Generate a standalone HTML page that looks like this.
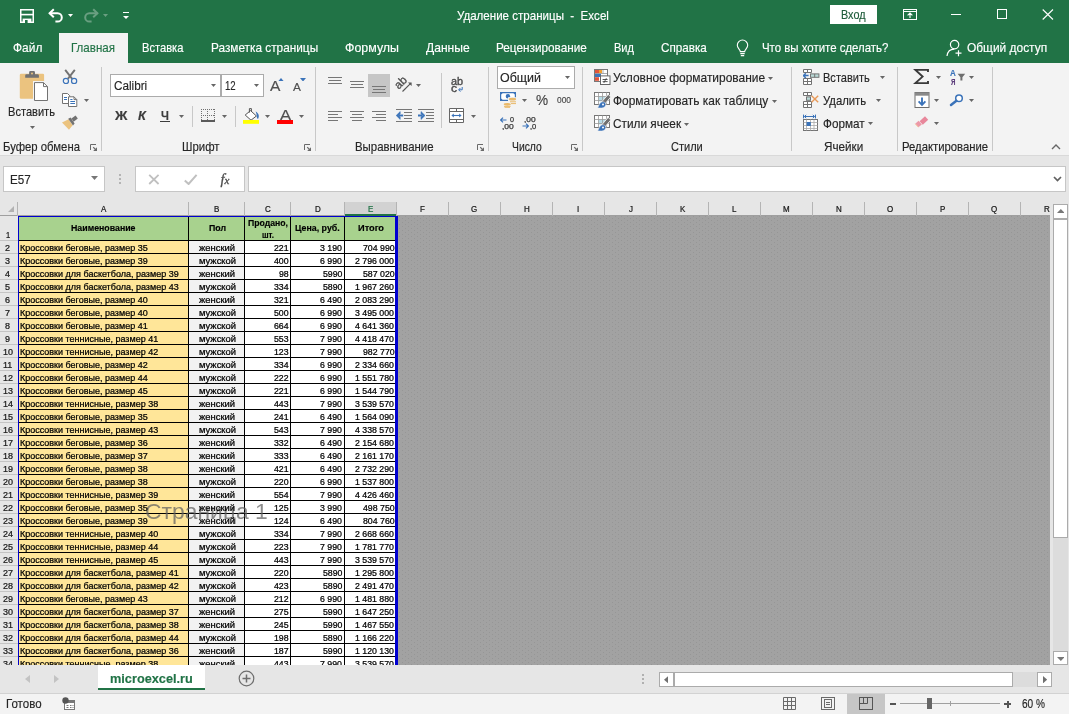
<!DOCTYPE html>
<html><head><meta charset="utf-8"><title>Excel</title>
<style>
html,body{margin:0;padding:0}
body{width:1069px;height:714px;overflow:hidden;position:relative;background:#e6e6e6;font-family:"Liberation Sans",sans-serif;}
.r{position:absolute;display:block}
.t{position:absolute;white-space:pre;transform-origin:0 50%;-webkit-text-stroke:0.15px;}
#w{position:absolute;left:0;top:0;width:1069px;height:714px;will-change:transform;}
</style></head><body><div id="w">
<div class="r" style="left:0px;top:0px;width:1069px;height:63px;background:#217346;"></div>
<div class="r" style="left:0px;top:63px;width:1069px;height:91.5px;background:#f3f3f3;"></div>
<div class="r" style="left:0px;top:154.5px;width:1069px;height:1px;background:#d9d9d9;"></div>
<div class="r" style="left:59px;top:33px;width:69px;height:30px;background:#f3f3f3;"></div>
<div class="t" style="left:457.0px;top:8.0px;font-size:11.9px;line-height:16px;color:#fff;transform:scaleX(0.9718);">Удаление страницы  -  Excel</div>
<div class="t" style="left:12.6px;top:40.0px;font-size:11.9px;line-height:16px;color:#fff;transform:scaleX(1.0049);">Файл</div>
<div class="t" style="left:71.2px;top:40.0px;font-size:11.9px;line-height:16px;color:#217346;transform:scaleX(0.9714);">Главная</div>
<div class="t" style="left:142.4px;top:40.0px;font-size:11.9px;line-height:16px;color:#fff;transform:scaleX(0.9360);">Вставка</div>
<div class="t" style="left:211.0px;top:40.0px;font-size:11.9px;line-height:16px;color:#fff;transform:scaleX(0.9930);">Разметка страницы</div>
<div class="t" style="left:345.0px;top:40.0px;font-size:11.9px;line-height:16px;color:#fff;transform:scaleX(1.0428);">Формулы</div>
<div class="t" style="left:425.8px;top:40.0px;font-size:11.9px;line-height:16px;color:#fff;transform:scaleX(1.0164);">Данные</div>
<div class="t" style="left:496.3px;top:40.0px;font-size:11.9px;line-height:16px;color:#fff;transform:scaleX(0.9892);">Рецензирование</div>
<div class="t" style="left:614.4px;top:40.0px;font-size:11.9px;line-height:16px;color:#fff;transform:scaleX(0.9290);">Вид</div>
<div class="t" style="left:661.1px;top:40.0px;font-size:11.9px;line-height:16px;color:#fff;transform:scaleX(0.9832);">Справка</div>
<div class="t" style="left:762.0px;top:40.0px;font-size:11.9px;line-height:16px;color:#fff;transform:scaleX(0.9616);">Что вы хотите сделать?</div>
<div class="t" style="left:966.7px;top:40.0px;font-size:11.9px;line-height:16px;color:#fff;transform:scaleX(1.0031);">Общий доступ</div>
<div class="r" style="left:830px;top:5px;width:47px;height:19px;background:#fff;"></div>
<div class="t" style="left:841.4px;top:7.0px;font-size:11.9px;line-height:16px;color:#1e5c3a;transform:scaleX(0.9101);">Вход</div>
<svg class="r" style="left:20px;top:9px" width="14" height="14" viewBox="0 0 14 14"><path d="M0.75 0.75H13.25V13.25H0.75Z" fill="none" stroke="#fff" stroke-width="1.5"/><path d="M1 5.6H13" stroke="#fff" stroke-width="1.6"/><rect x="2.6" y="9.6" width="8.8" height="4" fill="#fff"/><rect x="5" y="11" width="2.6" height="3" fill="#217346"/></svg>
<svg class="r" style="left:48.4px;top:8px" width="16" height="15" viewBox="0 0 16 15"><path d="M1.4 5.2H9.6A4.2 4.2 0 0 1 9.6 13.6H7.4" fill="none" stroke="#fff" stroke-width="2"/><path d="M5.8 1.2L1.6 5.2L5.8 9.2" fill="none" stroke="#fff" stroke-width="2"/></svg>
<svg class="r" style="left:68px;top:14.3px" width="5" height="3" viewBox="0 0 5 3"><path d="M0 0H5L2.5 3Z" fill="#fff"/></svg>
<svg class="r" style="left:82.8px;top:8px" width="16" height="15" viewBox="0 0 16 15"><path d="M14.6 5.2H6.4A4.2 4.2 0 0 0 6.4 13.6H8.6" fill="none" stroke="#6a9f81" stroke-width="2"/><path d="M10.2 1.2L14.4 5.2L10.2 9.2" fill="none" stroke="#6a9f81" stroke-width="2"/></svg>
<svg class="r" style="left:103.1px;top:14.3px" width="5" height="3" viewBox="0 0 5 3"><path d="M0 0H5L2.5 3Z" fill="#6a9f81"/></svg>
<div class="r" style="left:122.5px;top:11.9px;width:6px;height:1.3px;background:#fff;"></div>
<svg class="r" style="left:122.5px;top:15.8px" width="6" height="3" viewBox="0 0 6 3"><path d="M0 0H6L3 3Z" fill="#fff"/></svg>
<svg class="r" style="left:903px;top:9px" width="14" height="11" viewBox="0 0 14 11"><rect x="0.5" y="0.5" width="13" height="10" fill="none" stroke="#fff"/><path d="M0.5 2.5H13.5" stroke="#fff"/><path d="M7 9V4.3M4.6 6.4L7 4L9.4 6.4" fill="none" stroke="#fff" stroke-width="1.1"/></svg>
<div class="r" style="left:951px;top:14px;width:10px;height:1px;background:#fff;"></div>
<svg class="r" style="left:997px;top:9px" width="10" height="10" viewBox="0 0 10 10"><rect x="0.5" y="0.5" width="9" height="9" fill="none" stroke="#fff"/></svg>
<svg class="r" style="left:1042px;top:9px" width="11.9" height="11" viewBox="0 0 11.9 11"><path d="M0.7 0.5L11 10.5M11 0.5L0.7 10.5" stroke="#fff" stroke-width="1.1"/></svg>
<svg class="r" style="left:736px;top:39px" width="14" height="18" viewBox="0 0 14 18"><path d="M4.3 12.6C4.3 10.6 1.3 9.2 1.3 6.2A5.2 5.2 0 0 1 11.7 6.2C11.7 9.2 8.7 10.6 8.7 12.6Z" fill="none" stroke="#fff" stroke-width="1.1"/><path d="M4.3 14.6H8.7M4.8 16.6H8.2" stroke="#fff" stroke-width="1.1"/></svg>
<svg class="r" style="left:946px;top:39px" width="17" height="18" viewBox="0 0 17 18"><circle cx="8.6" cy="5.6" r="4.2" fill="none" stroke="#fff" stroke-width="1.2"/><path d="M1 17C1.6 12.6 4.6 10.2 8.2 10.2" fill="none" stroke="#fff" stroke-width="1.2"/><path d="M9.5 14.2H15.5M12.5 11.2V17.2" stroke="#fff" stroke-width="1.2"/></svg>
<div class="r" style="left:101px;top:67px;width:1px;height:84px;background:#c8c8c8;"></div>
<div class="r" style="left:315px;top:67px;width:1px;height:84px;background:#c8c8c8;"></div>
<div class="r" style="left:488px;top:67px;width:1px;height:84px;background:#c8c8c8;"></div>
<div class="r" style="left:582px;top:67px;width:1px;height:84px;background:#c8c8c8;"></div>
<div class="r" style="left:791px;top:67px;width:1px;height:84px;background:#c8c8c8;"></div>
<div class="r" style="left:897px;top:67px;width:1px;height:84px;background:#c8c8c8;"></div>
<div class="r" style="left:992px;top:67px;width:1px;height:84px;background:#c8c8c8;"></div>
<div class="t" style="left:3.0px;top:139.0px;font-size:11.9px;line-height:16px;color:#262626;transform:scaleX(0.9522);">Буфер обмена</div>
<div class="t" style="left:181.9px;top:139.0px;font-size:11.9px;line-height:16px;color:#262626;transform:scaleX(0.9578);">Шрифт</div>
<div class="t" style="left:354.9px;top:139.0px;font-size:11.9px;line-height:16px;color:#262626;transform:scaleX(0.9596);">Выравнивание</div>
<div class="t" style="left:511.9px;top:139.0px;font-size:11.9px;line-height:16px;color:#262626;transform:scaleX(0.8707);">Число</div>
<div class="t" style="left:671.2px;top:139.0px;font-size:11.9px;line-height:16px;color:#262626;transform:scaleX(0.9276);">Стили</div>
<div class="t" style="left:824.0px;top:139.0px;font-size:11.9px;line-height:16px;color:#262626;transform:scaleX(0.9847);">Ячейки</div>
<div class="t" style="left:901.7px;top:139.0px;font-size:11.9px;line-height:16px;color:#262626;transform:scaleX(0.9509);">Редактирование</div>
<div class="t" style="left:8.4px;top:104.0px;font-size:11.9px;line-height:16px;color:#262626;transform:scaleX(0.9318);">Вставить</div>
<div class="r" style="left:110px;top:74px;width:111px;height:23px;background:#fff;box-sizing:border-box;border:1px solid #ababab;"></div>
<div class="r" style="left:221px;top:74px;width:43px;height:23px;background:#fff;box-sizing:border-box;border:1px solid #ababab;"></div>
<div class="t" style="left:113.5px;top:78.0px;font-size:12px;line-height:16px;color:#262626;transform:scaleX(0.9763);">Calibri</div>
<div class="t" style="left:225.1px;top:78.0px;font-size:12px;line-height:16px;color:#262626;transform:scaleX(0.8017);">12</div>
<div class="r" style="left:497px;top:66px;width:78px;height:23px;background:#fff;box-sizing:border-box;border:1px solid #ababab;"></div>
<div class="t" style="left:500.2px;top:70.0px;font-size:11.9px;line-height:16px;color:#262626;transform:scaleX(1.0445);">Общий</div>
<div class="t" style="left:613.2px;top:70.0px;font-size:11.9px;line-height:16px;color:#262626;transform:scaleX(1.0060);">Условное форматирование</div>
<div class="t" style="left:613.2px;top:93.0px;font-size:11.9px;line-height:16px;color:#262626;transform:scaleX(1.0030);">Форматировать как таблицу</div>
<div class="t" style="left:613.2px;top:116.0px;font-size:11.9px;line-height:16px;color:#262626;transform:scaleX(0.9916);">Стили ячеек</div>
<div class="t" style="left:822.6px;top:70.0px;font-size:11.9px;line-height:16px;color:#262626;transform:scaleX(0.9298);">Вставить</div>
<div class="t" style="left:822.6px;top:93.0px;font-size:11.9px;line-height:16px;color:#262626;transform:scaleX(0.9509);">Удалить</div>
<div class="t" style="left:822.9px;top:116.0px;font-size:11.9px;line-height:16px;color:#262626;transform:scaleX(0.9841);">Формат</div>
<svg class="r" style="left:19px;top:70px" width="30" height="32" viewBox="0 0 30 32"><rect x="0.8" y="3.8" width="24.3" height="25" rx="1.2" fill="#ebc37f"/><path d="M6.2 7.7V5.6Q6.2 4.3 7.5 4.3H10.1V2.4Q10.1 1 11.5 1H14.6Q16 1 16 2.4V4.3H18.6Q19.9 4.3 19.9 5.6V7.7Z" fill="#727272"/><circle cx="13" cy="3.4" r="1" fill="#ebc37f"/><rect x="14" y="11" width="16" height="21" fill="#f3f3f3"/><path d="M15.5 12.6H24.5L28.5 16.6V30.5H15.5Z" fill="#fff" stroke="#727272" stroke-width="1"/><path d="M24.5 12.6V16.6H28.5" fill="none" stroke="#727272" stroke-width="1"/></svg>
<svg class="r" style="left:30px;top:126.1px" width="5" height="3" viewBox="0 0 5 3"><path d="M0 0H5L2.5 3Z" fill="#666"/></svg>
<svg class="r" style="left:62px;top:69px" width="16" height="16" viewBox="0 0 16 16"><path d="M3.2 0.8L10.2 9.8M12.8 0.8L5.8 9.8" stroke="#727272" stroke-width="1.9" fill="none"/><circle cx="3.9" cy="11.9" r="2.6" fill="none" stroke="#3b73b9" stroke-width="1.2"/><circle cx="12.1" cy="11.9" r="2.6" fill="none" stroke="#3b73b9" stroke-width="1.2"/></svg>
<svg class="r" style="left:61px;top:92px" width="17" height="16" viewBox="0 0 17 16"><path d="M1.5 1.5H6.5L8.8 3.8V11.5H1.5Z" fill="#fff" stroke="#727272"/><path d="M3 5.5H6M3 7.5H6" stroke="#3b73b9"/><path d="M7.5 4.8H13L15.8 7.6V14.5H7.5Z" fill="#fff" stroke="#727272"/><path d="M13 4.8V7.6H15.8" fill="none" stroke="#727272"/><path d="M9.3 9.5H14M9.3 11.5H14M9.3 7.5H11.5" stroke="#3b73b9"/></svg>
<svg class="r" style="left:84px;top:98.9px" width="5" height="3" viewBox="0 0 5 3"><path d="M0 0H5L2.5 3Z" fill="#666"/></svg>
<svg class="r" style="left:61px;top:115px" width="18" height="16" viewBox="0 0 18 16"><path d="M1 7.6L7.6 4.2L11.6 10.2L8 14.8Z" fill="#ebc37f"/><path d="M7.2 3.8L9.6 2.4L13.6 8.4L12 10.4Z" fill="#727272"/><path d="M10.4 3.6L14.6 0.6L16.8 3.6L12.6 6.8Z" fill="#727272"/></svg>
<svg class="r" style="left:90px;top:144px" width="8" height="8" viewBox="0 0 8 8"><path d="M0.5 6V0.5H6" fill="none" stroke="#6a6a6a"/><path d="M3.2 3.2L6 6" fill="none" stroke="#6a6a6a" stroke-width="1.1"/><path d="M7 3.2V7H3.2Z" fill="#6a6a6a"/></svg>
<svg class="r" style="left:304px;top:144px" width="8" height="8" viewBox="0 0 8 8"><path d="M0.5 6V0.5H6" fill="none" stroke="#6a6a6a"/><path d="M3.2 3.2L6 6" fill="none" stroke="#6a6a6a" stroke-width="1.1"/><path d="M7 3.2V7H3.2Z" fill="#6a6a6a"/></svg>
<svg class="r" style="left:477px;top:144px" width="8" height="8" viewBox="0 0 8 8"><path d="M0.5 6V0.5H6" fill="none" stroke="#6a6a6a"/><path d="M3.2 3.2L6 6" fill="none" stroke="#6a6a6a" stroke-width="1.1"/><path d="M7 3.2V7H3.2Z" fill="#6a6a6a"/></svg>
<svg class="r" style="left:570.5px;top:144px" width="8" height="8" viewBox="0 0 8 8"><path d="M0.5 6V0.5H6" fill="none" stroke="#6a6a6a"/><path d="M3.2 3.2L6 6" fill="none" stroke="#6a6a6a" stroke-width="1.1"/><path d="M7 3.2V7H3.2Z" fill="#6a6a6a"/></svg>
<svg class="r" style="left:211px;top:84.2px" width="5" height="3" viewBox="0 0 5 3"><path d="M0 0H5L2.5 3Z" fill="#666"/></svg>
<svg class="r" style="left:254.1px;top:84.2px" width="5" height="3" viewBox="0 0 5 3"><path d="M0 0H5L2.5 3Z" fill="#666"/></svg>
<div class="t" style="left:270.0px;top:77.0px;font-size:14px;line-height:19px;color:#505050;transform:scaleX(1.1138);">A</div>
<svg class="r" style="left:278px;top:77.5px" width="6" height="3.5" viewBox="0 0 6 3.5"><path d="M0 3.5H6L3 0Z" fill="#3b73b9"/></svg>
<div class="t" style="left:292.8px;top:80.0px;font-size:11.3px;line-height:15px;color:#505050;transform:scaleX(1.0481);">A</div>
<svg class="r" style="left:300px;top:77.5px" width="6" height="3.5" viewBox="0 0 6 3.5"><path d="M0 0H6L3 3.5Z" fill="#3b73b9"/></svg>
<div class="t" style="left:114.8px;top:108.0px;font-size:12px;line-height:16px;color:#3c3c3c;transform:scaleX(1.1434);font-weight:bold;">Ж</div>
<div class="t" style="left:138.3px;top:108.0px;font-size:12px;line-height:16px;color:#3c3c3c;transform:scaleX(1.0710);font-weight:bold;font-style:italic;">К</div>
<div class="t" style="left:160.9px;top:108.0px;font-size:12px;line-height:16px;color:#3c3c3c;transform:scaleX(0.9370);font-weight:bold;">Ч</div>
<div class="r" style="left:160px;top:121px;width:10px;height:1px;background:#3c3c3c;"></div>
<svg class="r" style="left:178.9px;top:115px" width="5" height="3" viewBox="0 0 5 3"><path d="M0 0H5L2.5 3Z" fill="#666"/></svg>
<div class="r" style="left:192px;top:106px;width:1px;height:21px;background:#c8c8c8;"></div>
<div class="r" style="left:235px;top:106px;width:1px;height:21px;background:#c8c8c8;"></div>
<svg class="r" style="left:201px;top:108px" width="14" height="15" viewBox="0 0 14 15"><g fill="#707070" shape-rendering="crispEdges"><rect x="0" y="1" width="1" height="1"/><rect x="2" y="1" width="1" height="1"/><rect x="4" y="1" width="1" height="1"/><rect x="6" y="1" width="1" height="1"/><rect x="8" y="1" width="1" height="1"/><rect x="10" y="1" width="1" height="1"/><rect x="12" y="1" width="1" height="1"/><rect x="0" y="7" width="1" height="1"/><rect x="2" y="7" width="1" height="1"/><rect x="4" y="7" width="1" height="1"/><rect x="6" y="7" width="1" height="1"/><rect x="8" y="7" width="1" height="1"/><rect x="10" y="7" width="1" height="1"/><rect x="12" y="7" width="1" height="1"/><rect x="0" y="1" width="1" height="1"/><rect x="0" y="3" width="1" height="1"/><rect x="0" y="5" width="1" height="1"/><rect x="0" y="7" width="1" height="1"/><rect x="0" y="9" width="1" height="1"/><rect x="0" y="11" width="1" height="1"/><rect x="6" y="1" width="1" height="1"/><rect x="6" y="3" width="1" height="1"/><rect x="6" y="5" width="1" height="1"/><rect x="6" y="7" width="1" height="1"/><rect x="6" y="9" width="1" height="1"/><rect x="6" y="11" width="1" height="1"/><rect x="13" y="1" width="1" height="1"/><rect x="13" y="3" width="1" height="1"/><rect x="13" y="5" width="1" height="1"/><rect x="13" y="7" width="1" height="1"/><rect x="13" y="9" width="1" height="1"/><rect x="13" y="11" width="1" height="1"/><rect x="0" y="12" width="14" height="2" fill="#5a5a5a"/></g></svg>
<svg class="r" style="left:222px;top:115px" width="5" height="3" viewBox="0 0 5 3"><path d="M0 0H5L2.5 3Z" fill="#666"/></svg>
<svg class="r" style="left:243px;top:107px" width="17" height="17" viewBox="0 0 17 17"><path d="M7.6 3.6L13.4 9L8 13.2L2.2 8Z" fill="#fff" stroke="#555" stroke-width="1"/><path d="M6.4 5.6V1.6H8.4V4.4" fill="none" stroke="#555"/><path d="M12.6 4.6C15.6 6 16.8 9.4 15 12C13 10.8 14.4 8 12.6 4.6Z" fill="#3b73b9"/><rect x="0" y="13" width="16" height="3.8" fill="#ffff00"/></svg>
<svg class="r" style="left:264.8px;top:115px" width="5" height="3" viewBox="0 0 5 3"><path d="M0 0H5L2.5 3Z" fill="#666"/></svg>
<div class="t" style="left:279.8px;top:106.0px;font-size:14.5px;line-height:19px;color:#505050;transform:scaleX(1.1477);">A</div>
<div class="r" style="left:277px;top:120px;width:16px;height:3.8px;background:#ff0000;"></div>
<svg class="r" style="left:298.8px;top:115px" width="5" height="3" viewBox="0 0 5 3"><path d="M0 0H5L2.5 3Z" fill="#666"/></svg>
<svg class="r" style="left:328px;top:76px" width="14" height="14" viewBox="0 0 14 14"><path d="M0 1.5H14M1 4.5H13M0 7.5H14" stroke="#767676" stroke-width="1" fill="none"/></svg>
<svg class="r" style="left:350px;top:80px" width="14" height="14" viewBox="0 0 14 14"><path d="M0 1.5H14M1 4.5H13M0 7.5H14" stroke="#767676" stroke-width="1" fill="none"/></svg>
<div class="r" style="left:368px;top:74px;width:22px;height:23px;background:#c6c6c6;"></div>
<svg class="r" style="left:372px;top:85px" width="14" height="14" viewBox="0 0 14 14"><path d="M0 1.5H14M1 4.5H13M0 7.5H14" stroke="#767676" stroke-width="1" fill="none"/></svg>
<svg class="r" style="left:328px;top:110px" width="14" height="18" viewBox="0 0 14 18"><path d="M0 1.5H14M0 4.5H10M0 7.5H14M0 10.5H10" stroke="#767676" stroke-width="1" fill="none"/></svg>
<svg class="r" style="left:350px;top:110px" width="14" height="18" viewBox="0 0 14 18"><path d="M0 1.5H14M2 4.5H12M0 7.5H14M2 10.5H12" stroke="#767676" stroke-width="1" fill="none"/></svg>
<svg class="r" style="left:372px;top:110px" width="14" height="18" viewBox="0 0 14 18"><path d="M0 1.5H14M4 4.5H14M0 7.5H14M4 10.5H14" stroke="#767676" stroke-width="1" fill="none"/></svg>
<div class="t" style="left:396.2px;top:79.8px;font-size:11.5px;line-height:14px;color:#4a4a4a;-webkit-text-stroke:0.3px;transform:rotate(-45deg);transform-origin:50%% 50%%;">ab</div>
<svg class="r" style="left:400px;top:80px" width="13" height="13" viewBox="0 0 13 13"><path d="M2.5 11.5L10.4 3.6" stroke="#555" stroke-width="1.1" fill="none"/><path d="M8 2.4H11.6V6Z" fill="#555"/></svg>
<svg class="r" style="left:415.9px;top:83.8px" width="5" height="3" viewBox="0 0 5 3"><path d="M0 0H5L2.5 3Z" fill="#666"/></svg>
<svg class="r" style="left:396px;top:108px" width="16" height="15" viewBox="0 0 16 15"><path d="M0 1.5H16M0 13.5H16M8 4.5H16M8 7.5H16M8 10.5H16" stroke="#767676" fill="none"/><path d="M3 7.5H7.2" stroke="#3b73b9" stroke-width="2" fill="none"/><path d="M4.2 3.6L0.2 7.5L4.2 11.4L4.2 9.2L2.6 7.5L4.2 5.8Z" fill="#3b73b9" stroke="#3b73b9" stroke-width="0.6"/></svg>
<svg class="r" style="left:418px;top:108px" width="16" height="15" viewBox="0 0 16 15"><path d="M0 1.5H16M0 13.5H16M8 4.5H16M8 7.5H16M8 10.5H16" stroke="#767676" fill="none"/><path d="M0 7.5H4" stroke="#3b73b9" stroke-width="2" fill="none"/><path d="M3 3.6L7 7.5L3 11.4L3 9.2L4.6 7.5L3 5.8Z" fill="#3b73b9" stroke="#3b73b9" stroke-width="0.6"/></svg>
<div class="r" style="left:441px;top:73px;width:1px;height:55px;background:#c8c8c8;"></div>
<div class="t" style="left:450.8px;top:75.0px;font-size:10.3px;line-height:14px;color:#4a4a4a;transform:scaleX(1.0562);-webkit-text-stroke:0.35px;">ab</div>
<div class="t" style="left:450.8px;top:82.0px;font-size:10.3px;line-height:14px;color:#4a4a4a;transform:scaleX(1.1650);-webkit-text-stroke:0.35px;">c</div>
<svg class="r" style="left:458px;top:87px" width="5" height="5" viewBox="0 0 5 5"><path d="M4.2 0V2.8H1" stroke="#3b73b9" fill="none" stroke-width="1"/><path d="M2.4 1L0.6 2.8L2.4 4.6" stroke="#3b73b9" fill="none"/></svg>
<svg class="r" style="left:449px;top:108px" width="16" height="15" viewBox="0 0 16 15"><path d="M0.5 0.5H14.5V14.5H0.5ZM0.5 3.5H14.5M0.5 11.5H14.5M7.5 0.5V3.5M7.5 11.5V14.5" fill="#fff" stroke="#666"/><path d="M3.4 7.5H11.6" fill="none" stroke="#3b73b9" stroke-width="1.1"/><path d="M4.8 5.6L2.4 7.5L4.8 9.4ZM10.2 5.6L12.6 7.5L10.2 9.4Z" fill="#3b73b9"/></svg>
<svg class="r" style="left:470.9px;top:114.9px" width="5" height="3" viewBox="0 0 5 3"><path d="M0 0H5L2.5 3Z" fill="#666"/></svg>
<svg class="r" style="left:564.8px;top:76.1px" width="5" height="3" viewBox="0 0 5 3"><path d="M0 0H5L2.5 3Z" fill="#666"/></svg>
<svg class="r" style="left:500px;top:92px" width="17" height="16" viewBox="0 0 17 16"><rect x="0" y="0" width="16" height="9" fill="#3b73b9"/><path d="M2.6 1.2H13.4L14.8 2.6V6.4L13.4 7.8H2.6L1.2 6.4V2.6Z" fill="#fff"/><circle cx="7.9" cy="4.2" r="2.2" fill="#3b73b9"/><rect x="8" y="5.2" width="9" height="4" fill="#f3f3f3"/><ellipse cx="12.5" cy="7.2" rx="3.6" ry="1.4" fill="#e9b96a"/><path d="M10 9.8H16M11 11.6H16" stroke="#e9b96a" stroke-width="1"/><ellipse cx="7.3" cy="12.3" rx="3.6" ry="1.4" fill="#e9b96a"/><path d="M4 14.4H10.6M4.6 15.7H10" stroke="#e9b96a" stroke-width="1"/></svg>
<svg class="r" style="left:522px;top:99px" width="5" height="3" viewBox="0 0 5 3"><path d="M0 0H5L2.5 3Z" fill="#666"/></svg>
<div class="t" style="left:536.3px;top:91.0px;font-size:14.5px;line-height:19px;color:#444;transform:scaleX(0.9386);">%</div>
<div class="t" style="left:556.9px;top:93.0px;font-size:9.5px;line-height:13px;color:#444;transform:scaleX(0.8834);">000</div>
<svg class="r" style="left:500px;top:117px" width="7" height="6" viewBox="0 0 7 6"><path d="M0.8 3H6.5M3 0.6L0.6 3L3 5.4" stroke="#3b73b9" stroke-width="1.2" fill="none"/></svg>
<div class="t" style="left:510.0px;top:114.0px;font-size:8px;line-height:11px;color:#333;transform:scaleX(0.8989);-webkit-text-stroke:0.25px;">0</div>
<div class="t" style="left:502.2px;top:121.0px;font-size:8px;line-height:11px;color:#333;transform:scaleX(1.0608);-webkit-text-stroke:0.25px;">,00</div>
<div class="t" style="left:524.2px;top:114.0px;font-size:8px;line-height:11px;color:#333;transform:scaleX(1.0518);-webkit-text-stroke:0.25px;">,00</div>
<svg class="r" style="left:522px;top:123px" width="7" height="6" viewBox="0 0 7 6"><path d="M0.5 3H6.2M4 0.6L6.4 3L4 5.4" stroke="#3b73b9" stroke-width="1.2" fill="none"/></svg>
<div class="t" style="left:529.6px;top:121.0px;font-size:8px;line-height:11px;color:#333;transform:scaleX(0.9440);-webkit-text-stroke:0.25px;">,0</div>
<svg class="r" style="left:768px;top:76.5px" width="5" height="3" viewBox="0 0 5 3"><path d="M0 0H5L2.5 3Z" fill="#666"/></svg>
<svg class="r" style="left:772.1px;top:99.5px" width="5" height="3" viewBox="0 0 5 3"><path d="M0 0H5L2.5 3Z" fill="#666"/></svg>
<svg class="r" style="left:683.8px;top:122.5px" width="5" height="3" viewBox="0 0 5 3"><path d="M0 0H5L2.5 3Z" fill="#666"/></svg>
<svg class="r" style="left:594px;top:69px" width="17" height="16" viewBox="0 0 17 16"><rect x="0.5" y="0.5" width="13" height="12" fill="#fff" stroke="#777"/><rect x="1" y="1" width="4" height="3.4" fill="#e0533a"/><rect x="5" y="1" width="3" height="3.4" fill="#f0a030"/><rect x="1" y="4.6" width="6" height="3.4" fill="#3b73b9"/><rect x="1" y="8.2" width="4" height="3.6" fill="#e0533a"/><path d="M1 4.5H13M9 1V5" stroke="#999" stroke-width="0.8"/><rect x="6.5" y="6.9" width="9.5" height="8.6" fill="#fff" stroke="#666"/><path d="M8.6 10.5H13.6M8.6 12.6H13.6M12.4 9.2L9.8 13.9" stroke="#444" stroke-width="0.9" fill="none"/></svg>
<svg class="r" style="left:594px;top:92px" width="17" height="17" viewBox="0 0 17 17"><rect x="0.5" y="0.5" width="15" height="12" fill="#fff" stroke="#777"/><rect x="4.5" y="4.5" width="7.5" height="5" fill="#b7dbe6"/><path d="M0.5 4.5H15.5M0.5 8.5H15.5M4.5 0.5V12.5M8.5 0.5V12.5M12.5 0.5V12.5" stroke="#999" stroke-width="0.8" fill="none"/><path d="M7.4 10.2L14.2 2.4L16.8 5L10.2 12.8Z" fill="#707070" stroke="#f3f3f3" stroke-width="0.9"/><path d="M3.6 15.8C5.2 14 5.4 9.8 8.8 9.8C11.8 9.8 12.6 13 10.8 14.8C9.2 16.4 6 16 3.6 15.8Z" fill="#3b73b9" stroke="#f3f3f3" stroke-width="0.5"/><circle cx="9" cy="12.6" r="1" fill="#fff"/></svg>
<svg class="r" style="left:594px;top:115px" width="17" height="17" viewBox="0 0 17 17"><rect x="0.5" y="0.5" width="15" height="12" fill="#fff" stroke="#777"/><rect x="4.5" y="4.5" width="7.5" height="5" fill="#b7dbe6"/><path d="M0.5 4.5H15.5M0.5 8.5H15.5M4.5 0.5V12.5M8.5 0.5V12.5M12.5 0.5V12.5" stroke="#999" stroke-width="0.8" fill="none"/><path d="M7.4 10.2L14.2 2.4L16.8 5L10.2 12.8Z" fill="#707070" stroke="#f3f3f3" stroke-width="0.9"/><path d="M3.6 15.8C5.2 14 5.4 9.8 8.8 9.8C11.8 9.8 12.6 13 10.8 14.8C9.2 16.4 6 16 3.6 15.8Z" fill="#3b73b9" stroke="#f3f3f3" stroke-width="0.5"/><circle cx="9" cy="12.6" r="1" fill="#fff"/></svg>
<svg class="r" style="left:879.7px;top:75.9px" width="5" height="3" viewBox="0 0 5 3"><path d="M0 0H5L2.5 3Z" fill="#666"/></svg>
<svg class="r" style="left:875.8px;top:99px" width="5" height="3" viewBox="0 0 5 3"><path d="M0 0H5L2.5 3Z" fill="#666"/></svg>
<svg class="r" style="left:868px;top:121.7px" width="5" height="3" viewBox="0 0 5 3"><path d="M0 0H5L2.5 3Z" fill="#666"/></svg>
<svg class="r" style="left:803px;top:69px" width="17" height="16" viewBox="0 0 17 16"><path d="M0.5 0.5H8.5V3.5H0.5ZM4.5 0.5V3.5M0.5 9.5H8.5V15.5H0.5ZM0.5 12.5H8.5M4.5 9.5V15.5" fill="#fff" stroke="#737373"/><rect x="7.5" y="4.9" width="8.4" height="3.4" fill="#b9d9d6" stroke="#737373"/><path d="M11.7 4.9V8.3" stroke="#737373"/><path d="M0.6 6.6H5.6M2.8 4.2L0.4 6.6L2.8 9" fill="none" stroke="#3b73b9" stroke-width="1.5"/></svg>
<svg class="r" style="left:803px;top:92px" width="17" height="16" viewBox="0 0 17 16"><path d="M0.5 0.5H8.5V3.5H0.5ZM4.5 0.5V3.5M0.5 9.5H8.5V15.5H0.5ZM0.5 12.5H8.5M4.5 9.5V15.5" fill="#fff" stroke="#737373"/><rect x="3.5" y="4.9" width="4" height="3.4" fill="#b9d9d6" stroke="#737373"/><path d="M8.6 3.8L15.2 10.2M15.2 3.8L8.6 10.2" stroke="#e89a5a" stroke-width="1.4" fill="none"/></svg>
<svg class="r" style="left:803px;top:114px" width="16" height="17" viewBox="0 0 16 17"><path d="M0.5 0.6V4.4M12.5 0.6V4.4M1.5 2.5H11.5M3.2 0.9L1.4 2.5L3.2 4.1M9.8 0.9L11.6 2.5L9.8 4.1" stroke="#3b73b9" fill="none"/><rect x="0.5" y="5.5" width="14" height="11" fill="#fff" stroke="#737373"/><path d="M0.5 8.5H14.5M0.5 11.5H14.5M0.5 14.5H14.5M3.5 5.5V16.5M7.5 5.5V16.5M11 5.5V16.5" stroke="#aaa" stroke-width="0.8" fill="none"/><rect x="3.6" y="8" width="4.2" height="4" fill="#3b73b9"/></svg>
<svg class="r" style="left:935.9px;top:75.9px" width="5" height="3" viewBox="0 0 5 3"><path d="M0 0H5L2.5 3Z" fill="#666"/></svg>
<svg class="r" style="left:969px;top:75.9px" width="5" height="3" viewBox="0 0 5 3"><path d="M0 0H5L2.5 3Z" fill="#666"/></svg>
<svg class="r" style="left:933.9px;top:99px" width="5" height="3" viewBox="0 0 5 3"><path d="M0 0H5L2.5 3Z" fill="#666"/></svg>
<svg class="r" style="left:969px;top:99px" width="5" height="3" viewBox="0 0 5 3"><path d="M0 0H5L2.5 3Z" fill="#666"/></svg>
<svg class="r" style="left:933.9px;top:121.9px" width="5" height="3" viewBox="0 0 5 3"><path d="M0 0H5L2.5 3Z" fill="#666"/></svg>
<svg class="r" style="left:913px;top:68px" width="17" height="17" viewBox="0 0 17 17"><path d="M15 4V1.9H2.4L9.6 8.6L2.4 15.1H15V13" fill="none" stroke="#3a3a3a" stroke-width="1.9" stroke-linejoin="miter"/></svg>
<div class="t" style="left:950.0px;top:67.0px;font-size:9px;line-height:12px;color:#3b73b9;transform:scaleX(0.8923);font-weight:bold;">A</div>
<div class="t" style="left:951.0px;top:76.0px;font-size:8.5px;line-height:12px;color:#5a3a7a;transform:scaleX(0.7202);font-weight:bold;">Я</div>
<svg class="r" style="left:957px;top:73px" width="9" height="8" viewBox="0 0 9 8"><path d="M0.6 0.8H8.2L5.4 4.2V7.4H3.4V4.2Z" fill="#6e6e6e"/></svg>
<svg class="r" style="left:914px;top:92px" width="16" height="16" viewBox="0 0 16 16"><rect x="1" y="0.5" width="14" height="15" fill="#fff" stroke="#6e6e6e"/><rect x="1" y="0.5" width="14" height="3.2" fill="#8a8a8a"/><path d="M8 5.6V12.6M4.6 9.4L8 12.8L11.4 9.4" fill="none" stroke="#3b73b9" stroke-width="1.9"/></svg>
<svg class="r" style="left:949px;top:93px" width="16" height="14" viewBox="0 0 16 14"><circle cx="10" cy="5.2" r="3.3" fill="#fff" stroke="#3b73b9" stroke-width="1.5"/><path d="M7.4 7.8L2 12" stroke="#3b73b9" stroke-width="2.5" stroke-linecap="round"/></svg>
<svg class="r" style="left:914px;top:115px" width="15" height="13" viewBox="0 0 15 13"><path d="M5.6 6.2L11 1.2L14.2 4.8L8.8 9.8Z" fill="#e8879b"/><path d="M1.2 8.8L4.6 5.8L7.8 9.4L4.4 12.2Z" fill="#ec98a8"/><path d="M1.2 8.8L4.4 12.2" stroke="#f2c9a0" stroke-width="1"/></svg>
<svg class="r" style="left:1051px;top:144px" width="10" height="6" viewBox="0 0 10 6"><path d="M1 5L5 1L9 5" fill="none" stroke="#666" stroke-width="1.4"/></svg>
<div class="r" style="left:3px;top:166px;width:102px;height:26px;background:#fff;box-sizing:border-box;border:1px solid #c6c6c6;"></div>
<div class="t" style="left:10.1px;top:172.0px;font-size:11.9px;line-height:16px;color:#262626;transform:scaleX(0.9776);">E57</div>
<div class="r" style="left:135px;top:166px;width:110px;height:26px;background:#fff;box-sizing:border-box;border:1px solid #c6c6c6;"></div>
<div class="r" style="left:248px;top:166px;width:818px;height:26px;background:#fff;box-sizing:border-box;border:1px solid #c6c6c6;"></div>
<svg class="r" style="left:91px;top:176px" width="7" height="4"><path d="M0 0H7L3.5 4Z" fill="#777"/></svg>
<div class="r" style="left:119px;top:174px;width:2px;height:2px;background:#b4b4b4;"></div>
<div class="r" style="left:119px;top:178px;width:2px;height:2px;background:#b4b4b4;"></div>
<div class="r" style="left:119px;top:182px;width:2px;height:2px;background:#b4b4b4;"></div>
<svg class="r" style="left:148px;top:174px" width="12" height="11" viewBox="0 0 12 11"><path d="M1.2 0.8L10.6 10M10.6 0.8L1.2 10" stroke="#c0c0c0" stroke-width="1.8" fill="none"/></svg>
<svg class="r" style="left:184px;top:174px" width="14" height="11" viewBox="0 0 14 11"><path d="M0.8 6.4L4.6 10L12.6 0.8" stroke="#c0c0c0" stroke-width="2" fill="none"/></svg>
<div class="t" style="left:220.5px;top:170px;font-family:'Liberation Serif',serif;font-style:italic;font-size:14.5px;line-height:18px;color:#4d4d4d;letter-spacing:0px;-webkit-text-stroke:0.3px;">f<span style="font-size:11px">x</span></div>
<svg class="r" style="left:1053px;top:175.5px" width="9" height="6" viewBox="0 0 9 6"><path d="M1 1L4.5 4.5L8 1" fill="none" stroke="#606060" stroke-width="1.7"/></svg>
<div class="r" style="left:0;top:202px;width:1050px;height:463px;overflow:hidden;background-color:#a2a2a2;background-image:radial-gradient(circle at 0.5px 0.5px,#969696 0.5px,transparent 0.7px),radial-gradient(circle at 0.5px 0.5px,#969696 0.5px,transparent 0.7px);background-size:6px 4px,6px 4px;background-position:0 0,3px 2px">
<div class="r" style="left:0px;top:0px;width:1050px;height:14px;background:#e6e6e6;"></div>
<div class="r" style="left:0px;top:13px;width:1050px;height:1px;background:#9f9f9f;"></div>
<div class="r" style="left:345px;top:0px;width:51px;height:12px;background:#d2d2d2;"></div>
<div class="r" style="left:345px;top:12px;width:52px;height:2px;background:#217346;"></div>
<div class="r" style="left:17px;top:0px;width:1px;height:14px;background:#b4b4b4;"></div>
<div class="t" style="left:100.8px;top:2.0px;font-size:8.3px;line-height:11px;color:#1a1a1a;transform:scaleX(0.9600);-webkit-text-stroke:0.24px;">A</div>
<div class="r" style="left:188px;top:0px;width:1px;height:14px;background:#b4b4b4;"></div>
<div class="t" style="left:213.8px;top:2.0px;font-size:8.3px;line-height:11px;color:#1a1a1a;transform:scaleX(0.9600);-webkit-text-stroke:0.24px;">B</div>
<div class="r" style="left:244px;top:0px;width:1px;height:14px;background:#b4b4b4;"></div>
<div class="t" style="left:264.6px;top:2.0px;font-size:8.3px;line-height:11px;color:#1a1a1a;transform:scaleX(0.9600);-webkit-text-stroke:0.24px;">C</div>
<div class="r" style="left:290px;top:0px;width:1px;height:14px;background:#b4b4b4;"></div>
<div class="t" style="left:314.6px;top:2.0px;font-size:8.3px;line-height:11px;color:#1a1a1a;transform:scaleX(0.9600);-webkit-text-stroke:0.24px;">D</div>
<div class="r" style="left:344px;top:0px;width:1px;height:14px;background:#b4b4b4;"></div>
<div class="t" style="left:367.8px;top:2.0px;font-size:8.3px;line-height:11px;color:#217346;transform:scaleX(0.9600);-webkit-text-stroke:0.24px;">E</div>
<div class="r" style="left:396px;top:0px;width:1px;height:14px;background:#b4b4b4;"></div>
<div class="t" style="left:420.1px;top:2.0px;font-size:8.3px;line-height:11px;color:#1a1a1a;transform:scaleX(0.9600);-webkit-text-stroke:0.24px;">F</div>
<div class="r" style="left:448px;top:0px;width:1px;height:14px;background:#b4b4b4;"></div>
<div class="t" style="left:471.4px;top:2.0px;font-size:8.3px;line-height:11px;color:#1a1a1a;transform:scaleX(0.9600);-webkit-text-stroke:0.24px;">G</div>
<div class="r" style="left:500px;top:0px;width:1px;height:14px;background:#b4b4b4;"></div>
<div class="t" style="left:523.6px;top:2.0px;font-size:8.3px;line-height:11px;color:#1a1a1a;transform:scaleX(0.9600);-webkit-text-stroke:0.24px;">H</div>
<div class="r" style="left:552px;top:0px;width:1px;height:14px;background:#b4b4b4;"></div>
<div class="t" style="left:577.4px;top:2.0px;font-size:8.3px;line-height:11px;color:#1a1a1a;transform:scaleX(0.9600);-webkit-text-stroke:0.24px;">I</div>
<div class="r" style="left:604px;top:0px;width:1px;height:14px;background:#b4b4b4;"></div>
<div class="t" style="left:628.5px;top:2.0px;font-size:8.3px;line-height:11px;color:#1a1a1a;transform:scaleX(0.9600);-webkit-text-stroke:0.24px;">J</div>
<div class="r" style="left:656px;top:0px;width:1px;height:14px;background:#b4b4b4;"></div>
<div class="t" style="left:679.8px;top:2.0px;font-size:8.3px;line-height:11px;color:#1a1a1a;transform:scaleX(0.9600);-webkit-text-stroke:0.24px;">K</div>
<div class="r" style="left:708px;top:0px;width:1px;height:14px;background:#b4b4b4;"></div>
<div class="t" style="left:732.3px;top:2.0px;font-size:8.3px;line-height:11px;color:#1a1a1a;transform:scaleX(0.9600);-webkit-text-stroke:0.24px;">L</div>
<div class="r" style="left:760px;top:0px;width:1px;height:14px;background:#b4b4b4;"></div>
<div class="t" style="left:783.2px;top:2.0px;font-size:8.3px;line-height:11px;color:#1a1a1a;transform:scaleX(0.9600);-webkit-text-stroke:0.24px;">M</div>
<div class="r" style="left:812px;top:0px;width:1px;height:14px;background:#b4b4b4;"></div>
<div class="t" style="left:835.6px;top:2.0px;font-size:8.3px;line-height:11px;color:#1a1a1a;transform:scaleX(0.9600);-webkit-text-stroke:0.24px;">N</div>
<div class="r" style="left:864px;top:0px;width:1px;height:14px;background:#b4b4b4;"></div>
<div class="t" style="left:887.4px;top:2.0px;font-size:8.3px;line-height:11px;color:#1a1a1a;transform:scaleX(0.9600);-webkit-text-stroke:0.24px;">O</div>
<div class="r" style="left:916px;top:0px;width:1px;height:14px;background:#b4b4b4;"></div>
<div class="t" style="left:939.8px;top:2.0px;font-size:8.3px;line-height:11px;color:#1a1a1a;transform:scaleX(0.9600);-webkit-text-stroke:0.24px;">P</div>
<div class="r" style="left:968px;top:0px;width:1px;height:14px;background:#b4b4b4;"></div>
<div class="t" style="left:991.4px;top:2.0px;font-size:8.3px;line-height:11px;color:#1a1a1a;transform:scaleX(0.9600);-webkit-text-stroke:0.24px;">Q</div>
<div class="r" style="left:1020px;top:0px;width:1px;height:14px;background:#b4b4b4;"></div>
<div class="t" style="left:1043.6px;top:2.0px;font-size:8.3px;line-height:11px;color:#1a1a1a;transform:scaleX(0.9600);-webkit-text-stroke:0.24px;">R</div>
<div class="r" style="left:0px;top:14px;width:18px;height:449px;background:#e6e6e6;"></div>
<svg class="r" style="left:8px;top:4px" width="6" height="6"><path d="M6 0V6H0Z" fill="#b2b2b2"/></svg>
<div class="r" style="left:18px;top:14px;width:378px;height:25px;background:#a8d28e;"></div>
<div class="r" style="left:18px;top:39px;width:170px;height:500px;background:#ffe699;"></div>
<div class="r" style="left:188px;top:39px;width:56px;height:500px;background:#f2f2f2;"></div>
<div class="r" style="left:244px;top:39px;width:152px;height:500px;background:#fff;"></div>
<div class="r" style="left:0px;top:38px;width:18px;height:1px;background:#c4c4c4;"></div>
<div class="r" style="left:18px;top:38px;width:378px;height:1px;background:#000;"></div>
<div class="r" style="left:0px;top:51px;width:18px;height:1px;background:#c4c4c4;"></div>
<div class="r" style="left:18px;top:51px;width:378px;height:1px;background:#000;"></div>
<div class="r" style="left:0px;top:64px;width:18px;height:1px;background:#c4c4c4;"></div>
<div class="r" style="left:18px;top:64px;width:378px;height:1px;background:#000;"></div>
<div class="r" style="left:0px;top:77px;width:18px;height:1px;background:#c4c4c4;"></div>
<div class="r" style="left:18px;top:77px;width:378px;height:1px;background:#000;"></div>
<div class="r" style="left:0px;top:90px;width:18px;height:1px;background:#c4c4c4;"></div>
<div class="r" style="left:18px;top:90px;width:378px;height:1px;background:#000;"></div>
<div class="r" style="left:0px;top:103px;width:18px;height:1px;background:#c4c4c4;"></div>
<div class="r" style="left:18px;top:103px;width:378px;height:1px;background:#000;"></div>
<div class="r" style="left:0px;top:116px;width:18px;height:1px;background:#c4c4c4;"></div>
<div class="r" style="left:18px;top:116px;width:378px;height:1px;background:#000;"></div>
<div class="r" style="left:0px;top:129px;width:18px;height:1px;background:#c4c4c4;"></div>
<div class="r" style="left:18px;top:129px;width:378px;height:1px;background:#000;"></div>
<div class="r" style="left:0px;top:142px;width:18px;height:1px;background:#c4c4c4;"></div>
<div class="r" style="left:18px;top:142px;width:378px;height:1px;background:#000;"></div>
<div class="r" style="left:0px;top:155px;width:18px;height:1px;background:#c4c4c4;"></div>
<div class="r" style="left:18px;top:155px;width:378px;height:1px;background:#000;"></div>
<div class="r" style="left:0px;top:168px;width:18px;height:1px;background:#c4c4c4;"></div>
<div class="r" style="left:18px;top:168px;width:378px;height:1px;background:#000;"></div>
<div class="r" style="left:0px;top:181px;width:18px;height:1px;background:#c4c4c4;"></div>
<div class="r" style="left:18px;top:181px;width:378px;height:1px;background:#000;"></div>
<div class="r" style="left:0px;top:194px;width:18px;height:1px;background:#c4c4c4;"></div>
<div class="r" style="left:18px;top:194px;width:378px;height:1px;background:#000;"></div>
<div class="r" style="left:0px;top:207px;width:18px;height:1px;background:#c4c4c4;"></div>
<div class="r" style="left:18px;top:207px;width:378px;height:1px;background:#000;"></div>
<div class="r" style="left:0px;top:220px;width:18px;height:1px;background:#c4c4c4;"></div>
<div class="r" style="left:18px;top:220px;width:378px;height:1px;background:#000;"></div>
<div class="r" style="left:0px;top:233px;width:18px;height:1px;background:#c4c4c4;"></div>
<div class="r" style="left:18px;top:233px;width:378px;height:1px;background:#000;"></div>
<div class="r" style="left:0px;top:246px;width:18px;height:1px;background:#c4c4c4;"></div>
<div class="r" style="left:18px;top:246px;width:378px;height:1px;background:#000;"></div>
<div class="r" style="left:0px;top:259px;width:18px;height:1px;background:#c4c4c4;"></div>
<div class="r" style="left:18px;top:259px;width:378px;height:1px;background:#000;"></div>
<div class="r" style="left:0px;top:272px;width:18px;height:1px;background:#c4c4c4;"></div>
<div class="r" style="left:18px;top:272px;width:378px;height:1px;background:#000;"></div>
<div class="r" style="left:0px;top:285px;width:18px;height:1px;background:#c4c4c4;"></div>
<div class="r" style="left:18px;top:285px;width:378px;height:1px;background:#000;"></div>
<div class="r" style="left:0px;top:298px;width:18px;height:1px;background:#c4c4c4;"></div>
<div class="r" style="left:18px;top:298px;width:378px;height:1px;background:#000;"></div>
<div class="r" style="left:0px;top:311px;width:18px;height:1px;background:#c4c4c4;"></div>
<div class="r" style="left:18px;top:311px;width:378px;height:1px;background:#000;"></div>
<div class="r" style="left:0px;top:324px;width:18px;height:1px;background:#c4c4c4;"></div>
<div class="r" style="left:18px;top:324px;width:378px;height:1px;background:#000;"></div>
<div class="r" style="left:0px;top:337px;width:18px;height:1px;background:#c4c4c4;"></div>
<div class="r" style="left:18px;top:337px;width:378px;height:1px;background:#000;"></div>
<div class="r" style="left:0px;top:350px;width:18px;height:1px;background:#c4c4c4;"></div>
<div class="r" style="left:18px;top:350px;width:378px;height:1px;background:#000;"></div>
<div class="r" style="left:0px;top:363px;width:18px;height:1px;background:#c4c4c4;"></div>
<div class="r" style="left:18px;top:363px;width:378px;height:1px;background:#000;"></div>
<div class="r" style="left:0px;top:376px;width:18px;height:1px;background:#c4c4c4;"></div>
<div class="r" style="left:18px;top:376px;width:378px;height:1px;background:#000;"></div>
<div class="r" style="left:0px;top:389px;width:18px;height:1px;background:#c4c4c4;"></div>
<div class="r" style="left:18px;top:389px;width:378px;height:1px;background:#000;"></div>
<div class="r" style="left:0px;top:402px;width:18px;height:1px;background:#c4c4c4;"></div>
<div class="r" style="left:18px;top:402px;width:378px;height:1px;background:#000;"></div>
<div class="r" style="left:0px;top:415px;width:18px;height:1px;background:#c4c4c4;"></div>
<div class="r" style="left:18px;top:415px;width:378px;height:1px;background:#000;"></div>
<div class="r" style="left:0px;top:428px;width:18px;height:1px;background:#c4c4c4;"></div>
<div class="r" style="left:18px;top:428px;width:378px;height:1px;background:#000;"></div>
<div class="r" style="left:0px;top:441px;width:18px;height:1px;background:#c4c4c4;"></div>
<div class="r" style="left:18px;top:441px;width:378px;height:1px;background:#000;"></div>
<div class="r" style="left:0px;top:454px;width:18px;height:1px;background:#c4c4c4;"></div>
<div class="r" style="left:18px;top:454px;width:378px;height:1px;background:#000;"></div>
<div class="r" style="left:0px;top:467px;width:18px;height:1px;background:#c4c4c4;"></div>
<div class="r" style="left:18px;top:467px;width:378px;height:1px;background:#000;"></div>
<div class="r" style="left:188px;top:15px;width:1px;height:500px;background:#000;"></div>
<div class="r" style="left:244px;top:15px;width:1px;height:500px;background:#000;"></div>
<div class="r" style="left:290px;top:15px;width:1px;height:500px;background:#000;"></div>
<div class="r" style="left:344px;top:15px;width:1px;height:500px;background:#000;"></div>
<div class="r" style="left:18px;top:14px;width:380px;height:1px;background:#0000d0;"></div>
<div class="r" style="left:18px;top:14px;width:1px;height:500px;background:#0000d0;"></div>
<div class="r" style="left:395px;top:14px;width:3px;height:500px;background:#0000d0;"></div>
<div class="t" style="left:145.0px;top:295.0px;font-size:22px;line-height:29px;color:rgba(95,95,95,0.72);transform:scaleX(1.0402);-webkit-text-stroke:0;">Страница 1</div>
<div class="t" style="left:71.0px;top:20.0px;font-size:8.5px;line-height:12px;color:#000;transform:scaleX(1.0344);font-weight:bold;">Наименование</div>
<div class="t" style="left:208.5px;top:20.0px;font-size:8.5px;line-height:12px;color:#000;transform:scaleX(1.0309);font-weight:bold;">Пол</div>
<div class="t" style="left:247.5px;top:15.0px;font-size:8.5px;line-height:12px;color:#000;transform:scaleX(1.0207);font-weight:bold;">Продано,</div>
<div class="t" style="left:261.5px;top:27.0px;font-size:8.5px;line-height:12px;color:#000;transform:scaleX(0.9331);font-weight:bold;">шт.</div>
<div class="t" style="left:295.3px;top:20.0px;font-size:8.5px;line-height:12px;color:#000;transform:scaleX(1.0386);font-weight:bold;">Цена, руб.</div>
<div class="t" style="left:357.5px;top:20.0px;font-size:8.5px;line-height:12px;color:#000;transform:scaleX(1.0846);font-weight:bold;">Итого</div>
<div class="t" style="left:5.5px;top:28.0px;font-size:8.3px;line-height:11px;color:#1a1a1a;transform:scaleX(0.9100);-webkit-text-stroke:0.24px;">1</div>
<div class="t" style="left:5.2px;top:41.0px;font-size:8.3px;line-height:11px;color:#1a1a1a;transform:scaleX(1.0800);-webkit-text-stroke:0.24px;">2</div>
<div class="t" style="left:20.1px;top:40.0px;font-size:8.5px;line-height:12px;color:#000;transform:scaleX(1.0580);-webkit-text-stroke:0.24px;">Кроссовки беговые, размер 35</div>
<div class="t" style="left:199.0px;top:40.0px;font-size:8.5px;line-height:12px;color:#000;transform:scaleX(1.1050);-webkit-text-stroke:0.24px;">женский</div>
<div class="t" style="left:273.6px;top:40.0px;font-size:8.5px;line-height:12px;color:#000;transform:scaleX(1.0300);-webkit-text-stroke:0.24px;">221</div>
<div class="t" style="left:320.1px;top:40.0px;font-size:8.5px;line-height:12px;color:#000;transform:scaleX(1.0300);-webkit-text-stroke:0.24px;">3 190</div>
<div class="t" style="left:362.5px;top:40.0px;font-size:8.5px;line-height:12px;color:#000;transform:scaleX(1.0300);-webkit-text-stroke:0.24px;">704 990</div>
<div class="t" style="left:5.2px;top:54.0px;font-size:8.3px;line-height:11px;color:#1a1a1a;transform:scaleX(1.0800);-webkit-text-stroke:0.24px;">3</div>
<div class="t" style="left:20.1px;top:53.0px;font-size:8.5px;line-height:12px;color:#000;transform:scaleX(1.0580);-webkit-text-stroke:0.24px;">Кроссовки беговые, размер 39</div>
<div class="t" style="left:198.5px;top:53.0px;font-size:8.5px;line-height:12px;color:#000;transform:scaleX(1.1050);-webkit-text-stroke:0.24px;">мужской</div>
<div class="t" style="left:273.6px;top:53.0px;font-size:8.5px;line-height:12px;color:#000;transform:scaleX(1.0300);-webkit-text-stroke:0.24px;">400</div>
<div class="t" style="left:320.1px;top:53.0px;font-size:8.5px;line-height:12px;color:#000;transform:scaleX(1.0300);-webkit-text-stroke:0.24px;">6 990</div>
<div class="t" style="left:355.2px;top:53.0px;font-size:8.5px;line-height:12px;color:#000;transform:scaleX(1.0300);-webkit-text-stroke:0.24px;">2 796 000</div>
<div class="t" style="left:5.2px;top:67.0px;font-size:8.3px;line-height:11px;color:#1a1a1a;transform:scaleX(1.0800);-webkit-text-stroke:0.24px;">4</div>
<div class="t" style="left:20.1px;top:66.0px;font-size:8.5px;line-height:12px;color:#000;transform:scaleX(1.0580);-webkit-text-stroke:0.24px;">Кроссовки для баскетбола, размер 39</div>
<div class="t" style="left:199.0px;top:66.0px;font-size:8.5px;line-height:12px;color:#000;transform:scaleX(1.1050);-webkit-text-stroke:0.24px;">женский</div>
<div class="t" style="left:278.5px;top:66.0px;font-size:8.5px;line-height:12px;color:#000;transform:scaleX(1.0300);-webkit-text-stroke:0.24px;">98</div>
<div class="t" style="left:322.5px;top:66.0px;font-size:8.5px;line-height:12px;color:#000;transform:scaleX(1.0300);-webkit-text-stroke:0.24px;">5990</div>
<div class="t" style="left:362.5px;top:66.0px;font-size:8.5px;line-height:12px;color:#000;transform:scaleX(1.0300);-webkit-text-stroke:0.24px;">587 020</div>
<div class="t" style="left:5.2px;top:80.0px;font-size:8.3px;line-height:11px;color:#1a1a1a;transform:scaleX(1.0800);-webkit-text-stroke:0.24px;">5</div>
<div class="t" style="left:20.1px;top:79.0px;font-size:8.5px;line-height:12px;color:#000;transform:scaleX(1.0580);-webkit-text-stroke:0.24px;">Кроссовки для баскетбола, размер 43</div>
<div class="t" style="left:198.5px;top:79.0px;font-size:8.5px;line-height:12px;color:#000;transform:scaleX(1.1050);-webkit-text-stroke:0.24px;">мужской</div>
<div class="t" style="left:273.6px;top:79.0px;font-size:8.5px;line-height:12px;color:#000;transform:scaleX(1.0300);-webkit-text-stroke:0.24px;">334</div>
<div class="t" style="left:322.5px;top:79.0px;font-size:8.5px;line-height:12px;color:#000;transform:scaleX(1.0300);-webkit-text-stroke:0.24px;">5890</div>
<div class="t" style="left:355.2px;top:79.0px;font-size:8.5px;line-height:12px;color:#000;transform:scaleX(1.0300);-webkit-text-stroke:0.24px;">1 967 260</div>
<div class="t" style="left:5.2px;top:93.0px;font-size:8.3px;line-height:11px;color:#1a1a1a;transform:scaleX(1.0800);-webkit-text-stroke:0.24px;">6</div>
<div class="t" style="left:20.1px;top:92.0px;font-size:8.5px;line-height:12px;color:#000;transform:scaleX(1.0580);-webkit-text-stroke:0.24px;">Кроссовки беговые, размер 40</div>
<div class="t" style="left:199.0px;top:92.0px;font-size:8.5px;line-height:12px;color:#000;transform:scaleX(1.1050);-webkit-text-stroke:0.24px;">женский</div>
<div class="t" style="left:273.6px;top:92.0px;font-size:8.5px;line-height:12px;color:#000;transform:scaleX(1.0300);-webkit-text-stroke:0.24px;">321</div>
<div class="t" style="left:320.1px;top:92.0px;font-size:8.5px;line-height:12px;color:#000;transform:scaleX(1.0300);-webkit-text-stroke:0.24px;">6 490</div>
<div class="t" style="left:355.2px;top:92.0px;font-size:8.5px;line-height:12px;color:#000;transform:scaleX(1.0300);-webkit-text-stroke:0.24px;">2 083 290</div>
<div class="t" style="left:5.2px;top:106.0px;font-size:8.3px;line-height:11px;color:#1a1a1a;transform:scaleX(1.0800);-webkit-text-stroke:0.24px;">7</div>
<div class="t" style="left:20.1px;top:105.0px;font-size:8.5px;line-height:12px;color:#000;transform:scaleX(1.0580);-webkit-text-stroke:0.24px;">Кроссовки беговые, размер 40</div>
<div class="t" style="left:198.5px;top:105.0px;font-size:8.5px;line-height:12px;color:#000;transform:scaleX(1.1050);-webkit-text-stroke:0.24px;">мужской</div>
<div class="t" style="left:273.6px;top:105.0px;font-size:8.5px;line-height:12px;color:#000;transform:scaleX(1.0300);-webkit-text-stroke:0.24px;">500</div>
<div class="t" style="left:320.1px;top:105.0px;font-size:8.5px;line-height:12px;color:#000;transform:scaleX(1.0300);-webkit-text-stroke:0.24px;">6 990</div>
<div class="t" style="left:355.2px;top:105.0px;font-size:8.5px;line-height:12px;color:#000;transform:scaleX(1.0300);-webkit-text-stroke:0.24px;">3 495 000</div>
<div class="t" style="left:5.2px;top:119.0px;font-size:8.3px;line-height:11px;color:#1a1a1a;transform:scaleX(1.0800);-webkit-text-stroke:0.24px;">8</div>
<div class="t" style="left:20.1px;top:118.0px;font-size:8.5px;line-height:12px;color:#000;transform:scaleX(1.0580);-webkit-text-stroke:0.24px;">Кроссовки беговые, размер 41</div>
<div class="t" style="left:198.5px;top:118.0px;font-size:8.5px;line-height:12px;color:#000;transform:scaleX(1.1050);-webkit-text-stroke:0.24px;">мужской</div>
<div class="t" style="left:273.6px;top:118.0px;font-size:8.5px;line-height:12px;color:#000;transform:scaleX(1.0300);-webkit-text-stroke:0.24px;">664</div>
<div class="t" style="left:320.1px;top:118.0px;font-size:8.5px;line-height:12px;color:#000;transform:scaleX(1.0300);-webkit-text-stroke:0.24px;">6 990</div>
<div class="t" style="left:355.2px;top:118.0px;font-size:8.5px;line-height:12px;color:#000;transform:scaleX(1.0300);-webkit-text-stroke:0.24px;">4 641 360</div>
<div class="t" style="left:5.2px;top:132.0px;font-size:8.3px;line-height:11px;color:#1a1a1a;transform:scaleX(1.0800);-webkit-text-stroke:0.24px;">9</div>
<div class="t" style="left:20.1px;top:131.0px;font-size:8.5px;line-height:12px;color:#000;transform:scaleX(1.0580);-webkit-text-stroke:0.24px;">Кроссовки теннисные, размер 41</div>
<div class="t" style="left:198.5px;top:131.0px;font-size:8.5px;line-height:12px;color:#000;transform:scaleX(1.1050);-webkit-text-stroke:0.24px;">мужской</div>
<div class="t" style="left:273.6px;top:131.0px;font-size:8.5px;line-height:12px;color:#000;transform:scaleX(1.0300);-webkit-text-stroke:0.24px;">553</div>
<div class="t" style="left:320.1px;top:131.0px;font-size:8.5px;line-height:12px;color:#000;transform:scaleX(1.0300);-webkit-text-stroke:0.24px;">7 990</div>
<div class="t" style="left:355.2px;top:131.0px;font-size:8.5px;line-height:12px;color:#000;transform:scaleX(1.0300);-webkit-text-stroke:0.24px;">4 418 470</div>
<div class="t" style="left:2.9px;top:145.0px;font-size:8.3px;line-height:11px;color:#1a1a1a;transform:scaleX(1.0800);-webkit-text-stroke:0.24px;">10</div>
<div class="t" style="left:20.1px;top:144.0px;font-size:8.5px;line-height:12px;color:#000;transform:scaleX(1.0580);-webkit-text-stroke:0.24px;">Кроссовки теннисные, размер 42</div>
<div class="t" style="left:198.5px;top:144.0px;font-size:8.5px;line-height:12px;color:#000;transform:scaleX(1.1050);-webkit-text-stroke:0.24px;">мужской</div>
<div class="t" style="left:273.6px;top:144.0px;font-size:8.5px;line-height:12px;color:#000;transform:scaleX(1.0300);-webkit-text-stroke:0.24px;">123</div>
<div class="t" style="left:320.1px;top:144.0px;font-size:8.5px;line-height:12px;color:#000;transform:scaleX(1.0300);-webkit-text-stroke:0.24px;">7 990</div>
<div class="t" style="left:362.5px;top:144.0px;font-size:8.5px;line-height:12px;color:#000;transform:scaleX(1.0300);-webkit-text-stroke:0.24px;">982 770</div>
<div class="t" style="left:2.9px;top:158.0px;font-size:8.3px;line-height:11px;color:#1a1a1a;transform:scaleX(1.0800);-webkit-text-stroke:0.24px;">11</div>
<div class="t" style="left:20.1px;top:157.0px;font-size:8.5px;line-height:12px;color:#000;transform:scaleX(1.0580);-webkit-text-stroke:0.24px;">Кроссовки беговые, размер 42</div>
<div class="t" style="left:198.5px;top:157.0px;font-size:8.5px;line-height:12px;color:#000;transform:scaleX(1.1050);-webkit-text-stroke:0.24px;">мужской</div>
<div class="t" style="left:273.6px;top:157.0px;font-size:8.5px;line-height:12px;color:#000;transform:scaleX(1.0300);-webkit-text-stroke:0.24px;">334</div>
<div class="t" style="left:320.1px;top:157.0px;font-size:8.5px;line-height:12px;color:#000;transform:scaleX(1.0300);-webkit-text-stroke:0.24px;">6 990</div>
<div class="t" style="left:355.2px;top:157.0px;font-size:8.5px;line-height:12px;color:#000;transform:scaleX(1.0300);-webkit-text-stroke:0.24px;">2 334 660</div>
<div class="t" style="left:2.9px;top:171.0px;font-size:8.3px;line-height:11px;color:#1a1a1a;transform:scaleX(1.0800);-webkit-text-stroke:0.24px;">12</div>
<div class="t" style="left:20.1px;top:170.0px;font-size:8.5px;line-height:12px;color:#000;transform:scaleX(1.0580);-webkit-text-stroke:0.24px;">Кроссовки беговые, размер 44</div>
<div class="t" style="left:198.5px;top:170.0px;font-size:8.5px;line-height:12px;color:#000;transform:scaleX(1.1050);-webkit-text-stroke:0.24px;">мужской</div>
<div class="t" style="left:273.6px;top:170.0px;font-size:8.5px;line-height:12px;color:#000;transform:scaleX(1.0300);-webkit-text-stroke:0.24px;">222</div>
<div class="t" style="left:320.1px;top:170.0px;font-size:8.5px;line-height:12px;color:#000;transform:scaleX(1.0300);-webkit-text-stroke:0.24px;">6 990</div>
<div class="t" style="left:355.2px;top:170.0px;font-size:8.5px;line-height:12px;color:#000;transform:scaleX(1.0300);-webkit-text-stroke:0.24px;">1 551 780</div>
<div class="t" style="left:2.9px;top:184.0px;font-size:8.3px;line-height:11px;color:#1a1a1a;transform:scaleX(1.0800);-webkit-text-stroke:0.24px;">13</div>
<div class="t" style="left:20.1px;top:183.0px;font-size:8.5px;line-height:12px;color:#000;transform:scaleX(1.0580);-webkit-text-stroke:0.24px;">Кроссовки беговые, размер 45</div>
<div class="t" style="left:198.5px;top:183.0px;font-size:8.5px;line-height:12px;color:#000;transform:scaleX(1.1050);-webkit-text-stroke:0.24px;">мужской</div>
<div class="t" style="left:273.6px;top:183.0px;font-size:8.5px;line-height:12px;color:#000;transform:scaleX(1.0300);-webkit-text-stroke:0.24px;">221</div>
<div class="t" style="left:320.1px;top:183.0px;font-size:8.5px;line-height:12px;color:#000;transform:scaleX(1.0300);-webkit-text-stroke:0.24px;">6 990</div>
<div class="t" style="left:355.2px;top:183.0px;font-size:8.5px;line-height:12px;color:#000;transform:scaleX(1.0300);-webkit-text-stroke:0.24px;">1 544 790</div>
<div class="t" style="left:2.9px;top:197.0px;font-size:8.3px;line-height:11px;color:#1a1a1a;transform:scaleX(1.0800);-webkit-text-stroke:0.24px;">14</div>
<div class="t" style="left:20.1px;top:196.0px;font-size:8.5px;line-height:12px;color:#000;transform:scaleX(1.0580);-webkit-text-stroke:0.24px;">Кроссовки теннисные, размер 38</div>
<div class="t" style="left:199.0px;top:196.0px;font-size:8.5px;line-height:12px;color:#000;transform:scaleX(1.1050);-webkit-text-stroke:0.24px;">женский</div>
<div class="t" style="left:273.6px;top:196.0px;font-size:8.5px;line-height:12px;color:#000;transform:scaleX(1.0300);-webkit-text-stroke:0.24px;">443</div>
<div class="t" style="left:320.1px;top:196.0px;font-size:8.5px;line-height:12px;color:#000;transform:scaleX(1.0300);-webkit-text-stroke:0.24px;">7 990</div>
<div class="t" style="left:355.2px;top:196.0px;font-size:8.5px;line-height:12px;color:#000;transform:scaleX(1.0300);-webkit-text-stroke:0.24px;">3 539 570</div>
<div class="t" style="left:2.9px;top:210.0px;font-size:8.3px;line-height:11px;color:#1a1a1a;transform:scaleX(1.0800);-webkit-text-stroke:0.24px;">15</div>
<div class="t" style="left:20.1px;top:209.0px;font-size:8.5px;line-height:12px;color:#000;transform:scaleX(1.0580);-webkit-text-stroke:0.24px;">Кроссовки беговые, размер 35</div>
<div class="t" style="left:199.0px;top:209.0px;font-size:8.5px;line-height:12px;color:#000;transform:scaleX(1.1050);-webkit-text-stroke:0.24px;">женский</div>
<div class="t" style="left:273.6px;top:209.0px;font-size:8.5px;line-height:12px;color:#000;transform:scaleX(1.0300);-webkit-text-stroke:0.24px;">241</div>
<div class="t" style="left:320.1px;top:209.0px;font-size:8.5px;line-height:12px;color:#000;transform:scaleX(1.0300);-webkit-text-stroke:0.24px;">6 490</div>
<div class="t" style="left:355.2px;top:209.0px;font-size:8.5px;line-height:12px;color:#000;transform:scaleX(1.0300);-webkit-text-stroke:0.24px;">1 564 090</div>
<div class="t" style="left:2.9px;top:223.0px;font-size:8.3px;line-height:11px;color:#1a1a1a;transform:scaleX(1.0800);-webkit-text-stroke:0.24px;">16</div>
<div class="t" style="left:20.1px;top:222.0px;font-size:8.5px;line-height:12px;color:#000;transform:scaleX(1.0580);-webkit-text-stroke:0.24px;">Кроссовки теннисные, размер 43</div>
<div class="t" style="left:198.5px;top:222.0px;font-size:8.5px;line-height:12px;color:#000;transform:scaleX(1.1050);-webkit-text-stroke:0.24px;">мужской</div>
<div class="t" style="left:273.6px;top:222.0px;font-size:8.5px;line-height:12px;color:#000;transform:scaleX(1.0300);-webkit-text-stroke:0.24px;">543</div>
<div class="t" style="left:320.1px;top:222.0px;font-size:8.5px;line-height:12px;color:#000;transform:scaleX(1.0300);-webkit-text-stroke:0.24px;">7 990</div>
<div class="t" style="left:355.2px;top:222.0px;font-size:8.5px;line-height:12px;color:#000;transform:scaleX(1.0300);-webkit-text-stroke:0.24px;">4 338 570</div>
<div class="t" style="left:2.9px;top:236.0px;font-size:8.3px;line-height:11px;color:#1a1a1a;transform:scaleX(1.0800);-webkit-text-stroke:0.24px;">17</div>
<div class="t" style="left:20.1px;top:235.0px;font-size:8.5px;line-height:12px;color:#000;transform:scaleX(1.0580);-webkit-text-stroke:0.24px;">Кроссовки беговые, размер 36</div>
<div class="t" style="left:199.0px;top:235.0px;font-size:8.5px;line-height:12px;color:#000;transform:scaleX(1.1050);-webkit-text-stroke:0.24px;">женский</div>
<div class="t" style="left:273.6px;top:235.0px;font-size:8.5px;line-height:12px;color:#000;transform:scaleX(1.0300);-webkit-text-stroke:0.24px;">332</div>
<div class="t" style="left:320.1px;top:235.0px;font-size:8.5px;line-height:12px;color:#000;transform:scaleX(1.0300);-webkit-text-stroke:0.24px;">6 490</div>
<div class="t" style="left:355.2px;top:235.0px;font-size:8.5px;line-height:12px;color:#000;transform:scaleX(1.0300);-webkit-text-stroke:0.24px;">2 154 680</div>
<div class="t" style="left:2.9px;top:249.0px;font-size:8.3px;line-height:11px;color:#1a1a1a;transform:scaleX(1.0800);-webkit-text-stroke:0.24px;">18</div>
<div class="t" style="left:20.1px;top:248.0px;font-size:8.5px;line-height:12px;color:#000;transform:scaleX(1.0580);-webkit-text-stroke:0.24px;">Кроссовки беговые, размер 37</div>
<div class="t" style="left:199.0px;top:248.0px;font-size:8.5px;line-height:12px;color:#000;transform:scaleX(1.1050);-webkit-text-stroke:0.24px;">женский</div>
<div class="t" style="left:273.6px;top:248.0px;font-size:8.5px;line-height:12px;color:#000;transform:scaleX(1.0300);-webkit-text-stroke:0.24px;">333</div>
<div class="t" style="left:320.1px;top:248.0px;font-size:8.5px;line-height:12px;color:#000;transform:scaleX(1.0300);-webkit-text-stroke:0.24px;">6 490</div>
<div class="t" style="left:355.2px;top:248.0px;font-size:8.5px;line-height:12px;color:#000;transform:scaleX(1.0300);-webkit-text-stroke:0.24px;">2 161 170</div>
<div class="t" style="left:2.9px;top:262.0px;font-size:8.3px;line-height:11px;color:#1a1a1a;transform:scaleX(1.0800);-webkit-text-stroke:0.24px;">19</div>
<div class="t" style="left:20.1px;top:261.0px;font-size:8.5px;line-height:12px;color:#000;transform:scaleX(1.0580);-webkit-text-stroke:0.24px;">Кроссовки беговые, размер 38</div>
<div class="t" style="left:199.0px;top:261.0px;font-size:8.5px;line-height:12px;color:#000;transform:scaleX(1.1050);-webkit-text-stroke:0.24px;">женский</div>
<div class="t" style="left:273.6px;top:261.0px;font-size:8.5px;line-height:12px;color:#000;transform:scaleX(1.0300);-webkit-text-stroke:0.24px;">421</div>
<div class="t" style="left:320.1px;top:261.0px;font-size:8.5px;line-height:12px;color:#000;transform:scaleX(1.0300);-webkit-text-stroke:0.24px;">6 490</div>
<div class="t" style="left:355.2px;top:261.0px;font-size:8.5px;line-height:12px;color:#000;transform:scaleX(1.0300);-webkit-text-stroke:0.24px;">2 732 290</div>
<div class="t" style="left:2.9px;top:275.0px;font-size:8.3px;line-height:11px;color:#1a1a1a;transform:scaleX(1.0800);-webkit-text-stroke:0.24px;">20</div>
<div class="t" style="left:20.1px;top:274.0px;font-size:8.5px;line-height:12px;color:#000;transform:scaleX(1.0580);-webkit-text-stroke:0.24px;">Кроссовки беговые, размер 38</div>
<div class="t" style="left:198.5px;top:274.0px;font-size:8.5px;line-height:12px;color:#000;transform:scaleX(1.1050);-webkit-text-stroke:0.24px;">мужской</div>
<div class="t" style="left:273.6px;top:274.0px;font-size:8.5px;line-height:12px;color:#000;transform:scaleX(1.0300);-webkit-text-stroke:0.24px;">220</div>
<div class="t" style="left:320.1px;top:274.0px;font-size:8.5px;line-height:12px;color:#000;transform:scaleX(1.0300);-webkit-text-stroke:0.24px;">6 990</div>
<div class="t" style="left:355.2px;top:274.0px;font-size:8.5px;line-height:12px;color:#000;transform:scaleX(1.0300);-webkit-text-stroke:0.24px;">1 537 800</div>
<div class="t" style="left:2.9px;top:288.0px;font-size:8.3px;line-height:11px;color:#1a1a1a;transform:scaleX(1.0800);-webkit-text-stroke:0.24px;">21</div>
<div class="t" style="left:20.1px;top:287.0px;font-size:8.5px;line-height:12px;color:#000;transform:scaleX(1.0580);-webkit-text-stroke:0.24px;">Кроссовки теннисные, размер 39</div>
<div class="t" style="left:199.0px;top:287.0px;font-size:8.5px;line-height:12px;color:#000;transform:scaleX(1.1050);-webkit-text-stroke:0.24px;">женский</div>
<div class="t" style="left:273.6px;top:287.0px;font-size:8.5px;line-height:12px;color:#000;transform:scaleX(1.0300);-webkit-text-stroke:0.24px;">554</div>
<div class="t" style="left:320.1px;top:287.0px;font-size:8.5px;line-height:12px;color:#000;transform:scaleX(1.0300);-webkit-text-stroke:0.24px;">7 990</div>
<div class="t" style="left:355.2px;top:287.0px;font-size:8.5px;line-height:12px;color:#000;transform:scaleX(1.0300);-webkit-text-stroke:0.24px;">4 426 460</div>
<div class="t" style="left:2.9px;top:301.0px;font-size:8.3px;line-height:11px;color:#1a1a1a;transform:scaleX(1.0800);-webkit-text-stroke:0.24px;">22</div>
<div class="t" style="left:20.1px;top:300.0px;font-size:8.5px;line-height:12px;color:#000;transform:scaleX(1.0580);-webkit-text-stroke:0.24px;">Кроссовки беговые, размер 35</div>
<div class="t" style="left:199.0px;top:300.0px;font-size:8.5px;line-height:12px;color:#000;transform:scaleX(1.1050);-webkit-text-stroke:0.24px;">женский</div>
<div class="t" style="left:273.6px;top:300.0px;font-size:8.5px;line-height:12px;color:#000;transform:scaleX(1.0300);-webkit-text-stroke:0.24px;">125</div>
<div class="t" style="left:320.1px;top:300.0px;font-size:8.5px;line-height:12px;color:#000;transform:scaleX(1.0300);-webkit-text-stroke:0.24px;">3 990</div>
<div class="t" style="left:362.5px;top:300.0px;font-size:8.5px;line-height:12px;color:#000;transform:scaleX(1.0300);-webkit-text-stroke:0.24px;">498 750</div>
<div class="t" style="left:2.9px;top:314.0px;font-size:8.3px;line-height:11px;color:#1a1a1a;transform:scaleX(1.0800);-webkit-text-stroke:0.24px;">23</div>
<div class="t" style="left:20.1px;top:313.0px;font-size:8.5px;line-height:12px;color:#000;transform:scaleX(1.0580);-webkit-text-stroke:0.24px;">Кроссовки беговые, размер 39</div>
<div class="t" style="left:199.0px;top:313.0px;font-size:8.5px;line-height:12px;color:#000;transform:scaleX(1.1050);-webkit-text-stroke:0.24px;">женский</div>
<div class="t" style="left:273.6px;top:313.0px;font-size:8.5px;line-height:12px;color:#000;transform:scaleX(1.0300);-webkit-text-stroke:0.24px;">124</div>
<div class="t" style="left:320.1px;top:313.0px;font-size:8.5px;line-height:12px;color:#000;transform:scaleX(1.0300);-webkit-text-stroke:0.24px;">6 490</div>
<div class="t" style="left:362.5px;top:313.0px;font-size:8.5px;line-height:12px;color:#000;transform:scaleX(1.0300);-webkit-text-stroke:0.24px;">804 760</div>
<div class="t" style="left:2.9px;top:327.0px;font-size:8.3px;line-height:11px;color:#1a1a1a;transform:scaleX(1.0800);-webkit-text-stroke:0.24px;">24</div>
<div class="t" style="left:20.1px;top:326.0px;font-size:8.5px;line-height:12px;color:#000;transform:scaleX(1.0580);-webkit-text-stroke:0.24px;">Кроссовки теннисные, размер 40</div>
<div class="t" style="left:198.5px;top:326.0px;font-size:8.5px;line-height:12px;color:#000;transform:scaleX(1.1050);-webkit-text-stroke:0.24px;">мужской</div>
<div class="t" style="left:273.6px;top:326.0px;font-size:8.5px;line-height:12px;color:#000;transform:scaleX(1.0300);-webkit-text-stroke:0.24px;">334</div>
<div class="t" style="left:320.1px;top:326.0px;font-size:8.5px;line-height:12px;color:#000;transform:scaleX(1.0300);-webkit-text-stroke:0.24px;">7 990</div>
<div class="t" style="left:355.2px;top:326.0px;font-size:8.5px;line-height:12px;color:#000;transform:scaleX(1.0300);-webkit-text-stroke:0.24px;">2 668 660</div>
<div class="t" style="left:2.9px;top:340.0px;font-size:8.3px;line-height:11px;color:#1a1a1a;transform:scaleX(1.0800);-webkit-text-stroke:0.24px;">25</div>
<div class="t" style="left:20.1px;top:339.0px;font-size:8.5px;line-height:12px;color:#000;transform:scaleX(1.0580);-webkit-text-stroke:0.24px;">Кроссовки теннисные, размер 44</div>
<div class="t" style="left:198.5px;top:339.0px;font-size:8.5px;line-height:12px;color:#000;transform:scaleX(1.1050);-webkit-text-stroke:0.24px;">мужской</div>
<div class="t" style="left:273.6px;top:339.0px;font-size:8.5px;line-height:12px;color:#000;transform:scaleX(1.0300);-webkit-text-stroke:0.24px;">223</div>
<div class="t" style="left:320.1px;top:339.0px;font-size:8.5px;line-height:12px;color:#000;transform:scaleX(1.0300);-webkit-text-stroke:0.24px;">7 990</div>
<div class="t" style="left:355.2px;top:339.0px;font-size:8.5px;line-height:12px;color:#000;transform:scaleX(1.0300);-webkit-text-stroke:0.24px;">1 781 770</div>
<div class="t" style="left:2.9px;top:353.0px;font-size:8.3px;line-height:11px;color:#1a1a1a;transform:scaleX(1.0800);-webkit-text-stroke:0.24px;">26</div>
<div class="t" style="left:20.1px;top:352.0px;font-size:8.5px;line-height:12px;color:#000;transform:scaleX(1.0580);-webkit-text-stroke:0.24px;">Кроссовки теннисные, размер 45</div>
<div class="t" style="left:198.5px;top:352.0px;font-size:8.5px;line-height:12px;color:#000;transform:scaleX(1.1050);-webkit-text-stroke:0.24px;">мужской</div>
<div class="t" style="left:273.6px;top:352.0px;font-size:8.5px;line-height:12px;color:#000;transform:scaleX(1.0300);-webkit-text-stroke:0.24px;">443</div>
<div class="t" style="left:320.1px;top:352.0px;font-size:8.5px;line-height:12px;color:#000;transform:scaleX(1.0300);-webkit-text-stroke:0.24px;">7 990</div>
<div class="t" style="left:355.2px;top:352.0px;font-size:8.5px;line-height:12px;color:#000;transform:scaleX(1.0300);-webkit-text-stroke:0.24px;">3 539 570</div>
<div class="t" style="left:2.9px;top:366.0px;font-size:8.3px;line-height:11px;color:#1a1a1a;transform:scaleX(1.0800);-webkit-text-stroke:0.24px;">27</div>
<div class="t" style="left:20.1px;top:365.0px;font-size:8.5px;line-height:12px;color:#000;transform:scaleX(1.0580);-webkit-text-stroke:0.24px;">Кроссовки для баскетбола, размер 41</div>
<div class="t" style="left:198.5px;top:365.0px;font-size:8.5px;line-height:12px;color:#000;transform:scaleX(1.1050);-webkit-text-stroke:0.24px;">мужской</div>
<div class="t" style="left:273.6px;top:365.0px;font-size:8.5px;line-height:12px;color:#000;transform:scaleX(1.0300);-webkit-text-stroke:0.24px;">220</div>
<div class="t" style="left:322.5px;top:365.0px;font-size:8.5px;line-height:12px;color:#000;transform:scaleX(1.0300);-webkit-text-stroke:0.24px;">5890</div>
<div class="t" style="left:355.2px;top:365.0px;font-size:8.5px;line-height:12px;color:#000;transform:scaleX(1.0300);-webkit-text-stroke:0.24px;">1 295 800</div>
<div class="t" style="left:2.9px;top:379.0px;font-size:8.3px;line-height:11px;color:#1a1a1a;transform:scaleX(1.0800);-webkit-text-stroke:0.24px;">28</div>
<div class="t" style="left:20.1px;top:378.0px;font-size:8.5px;line-height:12px;color:#000;transform:scaleX(1.0580);-webkit-text-stroke:0.24px;">Кроссовки для баскетбола, размер 42</div>
<div class="t" style="left:198.5px;top:378.0px;font-size:8.5px;line-height:12px;color:#000;transform:scaleX(1.1050);-webkit-text-stroke:0.24px;">мужской</div>
<div class="t" style="left:273.6px;top:378.0px;font-size:8.5px;line-height:12px;color:#000;transform:scaleX(1.0300);-webkit-text-stroke:0.24px;">423</div>
<div class="t" style="left:322.5px;top:378.0px;font-size:8.5px;line-height:12px;color:#000;transform:scaleX(1.0300);-webkit-text-stroke:0.24px;">5890</div>
<div class="t" style="left:355.2px;top:378.0px;font-size:8.5px;line-height:12px;color:#000;transform:scaleX(1.0300);-webkit-text-stroke:0.24px;">2 491 470</div>
<div class="t" style="left:2.9px;top:392.0px;font-size:8.3px;line-height:11px;color:#1a1a1a;transform:scaleX(1.0800);-webkit-text-stroke:0.24px;">29</div>
<div class="t" style="left:20.1px;top:391.0px;font-size:8.5px;line-height:12px;color:#000;transform:scaleX(1.0580);-webkit-text-stroke:0.24px;">Кроссовки беговые, размер 43</div>
<div class="t" style="left:198.5px;top:391.0px;font-size:8.5px;line-height:12px;color:#000;transform:scaleX(1.1050);-webkit-text-stroke:0.24px;">мужской</div>
<div class="t" style="left:273.6px;top:391.0px;font-size:8.5px;line-height:12px;color:#000;transform:scaleX(1.0300);-webkit-text-stroke:0.24px;">212</div>
<div class="t" style="left:320.1px;top:391.0px;font-size:8.5px;line-height:12px;color:#000;transform:scaleX(1.0300);-webkit-text-stroke:0.24px;">6 990</div>
<div class="t" style="left:355.2px;top:391.0px;font-size:8.5px;line-height:12px;color:#000;transform:scaleX(1.0300);-webkit-text-stroke:0.24px;">1 481 880</div>
<div class="t" style="left:2.9px;top:405.0px;font-size:8.3px;line-height:11px;color:#1a1a1a;transform:scaleX(1.0800);-webkit-text-stroke:0.24px;">30</div>
<div class="t" style="left:20.1px;top:404.0px;font-size:8.5px;line-height:12px;color:#000;transform:scaleX(1.0580);-webkit-text-stroke:0.24px;">Кроссовки для баскетбола, размер 37</div>
<div class="t" style="left:199.0px;top:404.0px;font-size:8.5px;line-height:12px;color:#000;transform:scaleX(1.1050);-webkit-text-stroke:0.24px;">женский</div>
<div class="t" style="left:273.6px;top:404.0px;font-size:8.5px;line-height:12px;color:#000;transform:scaleX(1.0300);-webkit-text-stroke:0.24px;">275</div>
<div class="t" style="left:322.5px;top:404.0px;font-size:8.5px;line-height:12px;color:#000;transform:scaleX(1.0300);-webkit-text-stroke:0.24px;">5990</div>
<div class="t" style="left:355.2px;top:404.0px;font-size:8.5px;line-height:12px;color:#000;transform:scaleX(1.0300);-webkit-text-stroke:0.24px;">1 647 250</div>
<div class="t" style="left:2.9px;top:418.0px;font-size:8.3px;line-height:11px;color:#1a1a1a;transform:scaleX(1.0800);-webkit-text-stroke:0.24px;">31</div>
<div class="t" style="left:20.1px;top:417.0px;font-size:8.5px;line-height:12px;color:#000;transform:scaleX(1.0580);-webkit-text-stroke:0.24px;">Кроссовки для баскетбола, размер 38</div>
<div class="t" style="left:199.0px;top:417.0px;font-size:8.5px;line-height:12px;color:#000;transform:scaleX(1.1050);-webkit-text-stroke:0.24px;">женский</div>
<div class="t" style="left:273.6px;top:417.0px;font-size:8.5px;line-height:12px;color:#000;transform:scaleX(1.0300);-webkit-text-stroke:0.24px;">245</div>
<div class="t" style="left:322.5px;top:417.0px;font-size:8.5px;line-height:12px;color:#000;transform:scaleX(1.0300);-webkit-text-stroke:0.24px;">5990</div>
<div class="t" style="left:355.2px;top:417.0px;font-size:8.5px;line-height:12px;color:#000;transform:scaleX(1.0300);-webkit-text-stroke:0.24px;">1 467 550</div>
<div class="t" style="left:2.9px;top:431.0px;font-size:8.3px;line-height:11px;color:#1a1a1a;transform:scaleX(1.0800);-webkit-text-stroke:0.24px;">32</div>
<div class="t" style="left:20.1px;top:430.0px;font-size:8.5px;line-height:12px;color:#000;transform:scaleX(1.0580);-webkit-text-stroke:0.24px;">Кроссовки для баскетбола, размер 44</div>
<div class="t" style="left:198.5px;top:430.0px;font-size:8.5px;line-height:12px;color:#000;transform:scaleX(1.1050);-webkit-text-stroke:0.24px;">мужской</div>
<div class="t" style="left:273.6px;top:430.0px;font-size:8.5px;line-height:12px;color:#000;transform:scaleX(1.0300);-webkit-text-stroke:0.24px;">198</div>
<div class="t" style="left:322.5px;top:430.0px;font-size:8.5px;line-height:12px;color:#000;transform:scaleX(1.0300);-webkit-text-stroke:0.24px;">5890</div>
<div class="t" style="left:355.2px;top:430.0px;font-size:8.5px;line-height:12px;color:#000;transform:scaleX(1.0300);-webkit-text-stroke:0.24px;">1 166 220</div>
<div class="t" style="left:2.9px;top:444.0px;font-size:8.3px;line-height:11px;color:#1a1a1a;transform:scaleX(1.0800);-webkit-text-stroke:0.24px;">33</div>
<div class="t" style="left:20.1px;top:443.0px;font-size:8.5px;line-height:12px;color:#000;transform:scaleX(1.0580);-webkit-text-stroke:0.24px;">Кроссовки для баскетбола, размер 36</div>
<div class="t" style="left:199.0px;top:443.0px;font-size:8.5px;line-height:12px;color:#000;transform:scaleX(1.1050);-webkit-text-stroke:0.24px;">женский</div>
<div class="t" style="left:273.6px;top:443.0px;font-size:8.5px;line-height:12px;color:#000;transform:scaleX(1.0300);-webkit-text-stroke:0.24px;">187</div>
<div class="t" style="left:322.5px;top:443.0px;font-size:8.5px;line-height:12px;color:#000;transform:scaleX(1.0300);-webkit-text-stroke:0.24px;">5990</div>
<div class="t" style="left:355.2px;top:443.0px;font-size:8.5px;line-height:12px;color:#000;transform:scaleX(1.0300);-webkit-text-stroke:0.24px;">1 120 130</div>
<div class="t" style="left:2.9px;top:457.0px;font-size:8.3px;line-height:11px;color:#1a1a1a;transform:scaleX(1.0800);-webkit-text-stroke:0.24px;">34</div>
<div class="t" style="left:20.1px;top:456.0px;font-size:8.5px;line-height:12px;color:#000;transform:scaleX(1.0580);-webkit-text-stroke:0.24px;">Кроссовки теннисные, размер 38</div>
<div class="t" style="left:199.0px;top:456.0px;font-size:8.5px;line-height:12px;color:#000;transform:scaleX(1.1050);-webkit-text-stroke:0.24px;">женский</div>
<div class="t" style="left:273.6px;top:456.0px;font-size:8.5px;line-height:12px;color:#000;transform:scaleX(1.0300);-webkit-text-stroke:0.24px;">443</div>
<div class="t" style="left:320.1px;top:456.0px;font-size:8.5px;line-height:12px;color:#000;transform:scaleX(1.0300);-webkit-text-stroke:0.24px;">7 990</div>
<div class="t" style="left:355.2px;top:456.0px;font-size:8.5px;line-height:12px;color:#000;transform:scaleX(1.0300);-webkit-text-stroke:0.24px;">3 539 570</div>
</div>
<div class="r" style="left:1050px;top:202px;width:19px;height:463px;background:#e6e6e6;"></div>
<div class="r" style="left:1053px;top:219px;width:15px;height:433px;background:#dcdcdc;"></div>
<div class="r" style="left:1053px;top:204px;width:15px;height:15px;background:#fff;box-sizing:border-box;border:1px solid #ababab;"></div>
<div class="r" style="left:1053px;top:651px;width:15px;height:14px;background:#fff;box-sizing:border-box;border:1px solid #ababab;"></div>
<div class="r" style="left:1053px;top:219px;width:15px;height:319px;background:#fff;box-sizing:border-box;border:1px solid #ababab;"></div>
<svg class="r" style="left:1056.7px;top:209.3px" width="7.6" height="4"><path d="M0 4H7.6L3.8 0Z" fill="#777"/></svg>
<svg class="r" style="left:1056.7px;top:656.5px" width="7.6" height="4"><path d="M0 0H7.6L3.8 4Z" fill="#777"/></svg>
<div class="r" style="left:0px;top:665px;width:1069px;height:29px;background:#e6e6e6;"></div>
<div class="r" style="left:98px;top:665px;width:107px;height:25px;background:#fff;"></div>
<div class="r" style="left:98px;top:688px;width:107px;height:2px;background:#217346;"></div>
<div class="t" style="left:110.4px;top:670.0px;font-size:13px;line-height:17px;color:#217346;transform:scaleX(0.9794);font-weight:bold;">microexcel.ru</div>
<svg class="r" style="left:25px;top:675px" width="5" height="8" viewBox="0 0 5 8"><path d="M5 0V8L0 4Z" fill="#c3c3c3"/></svg>
<svg class="r" style="left:54px;top:675px" width="5" height="8" viewBox="0 0 5 8"><path d="M0 0V8L5 4Z" fill="#c3c3c3"/></svg>
<svg class="r" style="left:238px;top:670px" width="17" height="17" viewBox="0 0 17 17"><circle cx="8.5" cy="8.5" r="7.3" fill="none" stroke="#6e6e6e" stroke-width="1.2"/><path d="M4.5 8.5H12.5M8.5 4.5V12.5" stroke="#6e6e6e" stroke-width="1.5" fill="none"/></svg>
<div class="r" style="left:642px;top:674px;width:2px;height:2px;background:#b0b0b0;"></div>
<div class="r" style="left:642px;top:678px;width:2px;height:2px;background:#b0b0b0;"></div>
<div class="r" style="left:642px;top:682px;width:2px;height:2px;background:#b0b0b0;"></div>
<div class="r" style="left:674px;top:672px;width:363px;height:15px;background:#dcdcdc;"></div>
<div class="r" style="left:659px;top:672px;width:15px;height:15px;background:#fff;box-sizing:border-box;border:1px solid #ababab;"></div>
<div class="r" style="left:1037px;top:672px;width:15px;height:15px;background:#fff;box-sizing:border-box;border:1px solid #ababab;"></div>
<div class="r" style="left:674px;top:672px;width:339px;height:15px;background:#fff;box-sizing:border-box;border:1px solid #ababab;"></div>
<svg class="r" style="left:664px;top:675.8px" width="4.2" height="7.4" viewBox="0 0 4.2 7.4"><path d="M4.2 0V7.4L0 3.7Z" fill="#707070"/></svg>
<svg class="r" style="left:1043px;top:675.8px" width="4.2" height="7.4" viewBox="0 0 4.2 7.4"><path d="M0 0V7.4L4.2 3.7Z" fill="#707070"/></svg>
<div class="r" style="left:0px;top:693.5px;width:1069px;height:21px;background:#f3f3f3;"></div>
<div class="r" style="left:0px;top:692.6px;width:1069px;height:1px;background:#d2d2d2;"></div>
<div class="t" style="left:5.6px;top:696.0px;font-size:11.9px;line-height:16px;color:#262626;transform:scaleX(0.9688);">Готово</div>
<svg class="r" style="left:62px;top:697px" width="13" height="13" viewBox="0 0 13 13"><rect x="2.5" y="3.5" width="10" height="9" fill="#fff" stroke="#777" stroke-width="1"/><rect x="2" y="3" width="11" height="3" fill="#777"/><circle cx="3.5" cy="3.5" r="3.2" fill="#555"/><path d="M4.5 8.5h2M8 8.5h1.5M10.5 8.5h1M4.5 10.5h2M8 10.5h1.5M10.5 10.5h1" stroke="#777" stroke-width="1"/></svg>
<div class="r" style="left:847px;top:693.5px;width:38px;height:21px;background:#c6c6c6;"></div>
<svg class="r" style="left:783px;top:697px" width="13" height="13" viewBox="0 0 13 13"><path d="M0.5 0.5H12.5V12.5H0.5ZM0.5 4.5H12.5M0.5 8.5H12.5M4.5 0.5V12.5M8.5 0.5V12.5" fill="none" stroke="#6a6a6a" stroke-width="1"/></svg>
<svg class="r" style="left:821px;top:697px" width="14" height="13" viewBox="0 0 14 13"><rect x="0.5" y="0.5" width="13" height="12" fill="none" stroke="#6a6a6a"/><rect x="3.5" y="2.5" width="7" height="8" fill="none" stroke="#6a6a6a"/><path d="M5 5.5H9M5 7.5H9" stroke="#6a6a6a"/></svg>
<svg class="r" style="left:859px;top:697px" width="14" height="13" viewBox="0 0 14 13"><rect x="0.5" y="0.5" width="13" height="12" fill="none" stroke="#555"/><path d="M0.5 6.5H8.5V0.5M4.5 0.5V6.5" fill="none" stroke="#555"/></svg>
<div class="r" style="left:890px;top:703px;width:6px;height:2px;background:#555;"></div>
<div class="r" style="left:900px;top:703px;width:100px;height:1px;background:#a0a0a0;"></div>
<div class="r" style="left:950px;top:701px;width:1px;height:5px;background:#a0a0a0;"></div>
<div class="r" style="left:927px;top:698px;width:5px;height:11px;background:#666;"></div>
<div class="r" style="left:1004px;top:703px;width:7px;height:2px;background:#555;"></div>
<div class="r" style="left:1006.5px;top:700.5px;width:2px;height:7px;background:#555;"></div>
<div class="t" style="left:1022.3px;top:696.0px;font-size:11.9px;line-height:16px;color:#262626;transform:scaleX(0.8479);">60 %</div>
</div></body></html>
